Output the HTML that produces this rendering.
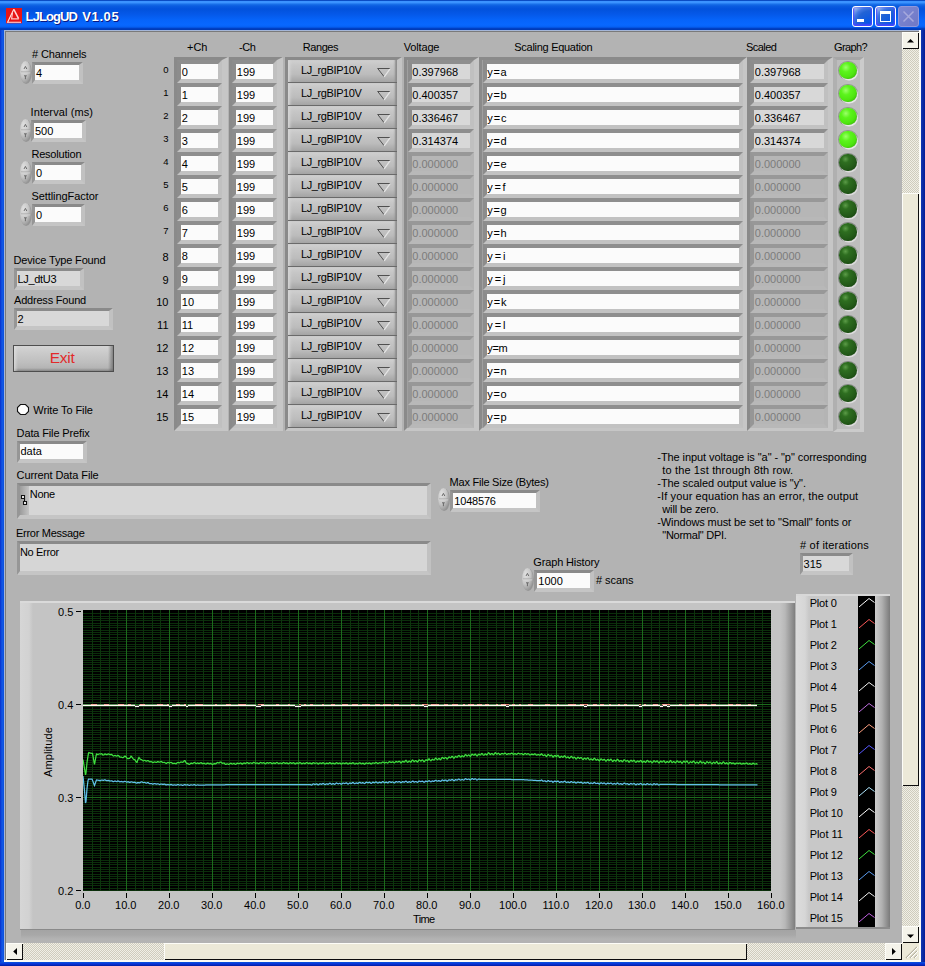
<!DOCTYPE html>
<html><head><meta charset="utf-8"><title>LJLogUD V1.05</title>
<style>
html,body{margin:0;padding:0;background:#0a3cc8;}
body{width:925px;height:966px;overflow:hidden;position:relative;font-family:"Liberation Sans", sans-serif;}
#win{position:absolute;left:0;top:0;width:925px;height:966px;overflow:hidden;
 background:linear-gradient(90deg,#0a30cc 0,#0a40d8 1px,#1258e6 2px,#0c50de 4px,#0855dd 5px,#0855dd 920px,#1038b4 921px,#0a2aa2 923px,#041c98 925px);}
#win:after{content:"";position:absolute;left:0;right:0;bottom:0;height:4px;background:linear-gradient(180deg,#0855dd 0,#0831d9 2px,#001ea0 4px);}
#title{position:absolute;left:0;top:0;width:925px;height:30px;
 background:linear-gradient(180deg,#0a4cc4 0,#0a4cc4 1px,#3b93ff 1.2px,#3b93ff 2.8px,#1a72ea 4px,#0a5ce0 6px,#0252dc 9px,#0558e8 14px,#0664fa 20px,#0868ff 25px,#0660f2 27px,#0040c4 28.5px,#0038b0 30px);
 }
.tb{position:absolute;top:6px;width:19px;height:19px;border:1px solid #fff;border-radius:3px;
 background:radial-gradient(circle at 90% 90%,#0054e9 0,#2263d5 55%,#4479e4 70%,#a3bbec 90%,#fff 100%);
 box-shadow:inset 0 -1px 2px 1px #4646ff;}
.tb.dis{border-color:#8f98dc;background:linear-gradient(135deg,#7e88d2,#6f78c6);box-shadow:none;}
#client{position:absolute;left:6px;top:32px;width:913px;height:928px;background:#b3b3b3;overflow:hidden;}
#abs{position:absolute;left:-6px;top:-32px;width:925px;height:966px;}
.t{position:absolute;white-space:pre;display:block;}
.led{position:absolute;width:17.4px;height:17.4px;border-radius:50%;}
.led.on{background:radial-gradient(circle at 38% 32%,#9cff6a 0,#5cf41c 28%,#4fe610 60%,#2c9c06 100%);box-shadow:1px 1.5px 0 0 #e8e8e8, 0 0 0 1px rgba(90,110,80,.45);}
.led.off{background:radial-gradient(circle at 36% 30%,#5c9c48 0,#2e6e20 22%,#235a18 60%,#123a0c 100%);box-shadow:1px 1.5px 0 0 #dcdcdc, 0 0 0 1px rgba(60,70,60,.45);}
#grid{position:absolute;left:0;top:0;right:0;bottom:0;background:repeating-linear-gradient(180deg,#0e340e 0,#0e340e 1px,#000 1px,#000 2.325px);}
.track{background:repeating-conic-gradient(#f0efe6 0 25%,#cfccbd 0 50%) 0 0/2px 2px;}
.sbtn.ab{background:#f4f3ea;}
.sbtn{position:relative;background:#ece9d8;box-sizing:border-box;box-shadow:inset 1px 1px 0 0 #fdfdf8, inset -1px -1px 0 0 #0c0c0c;}
</style></head>
<body>
<div id="win">
<div id="title"></div>
<svg style="position:absolute;left:6px;top:8px" width="16" height="16" viewBox="0 0 16 16">
<rect x="0" y="0" width="16" height="15.3" fill="#e81414"/>
<path d="M7.8 1.3 L1.6 14.3 L15 14.3" fill="none" stroke="#ffe6e6" stroke-width="1.1" stroke-linejoin="miter"/>
<path d="M7.8 1.3 L12.6 10.6" fill="none" stroke="#ffd8d8" stroke-width="1.5"/>
<path d="M6.5 5 L5.6 10.8 L12.8 10.8" fill="none" stroke="#ffc4c4" stroke-width="1.2"/>
</svg>
<span class="t" style="left:25.60px;top:9.40px;font-size:13px;line-height:16px;height:16px;color:#fff;letter-spacing:-0.897px;font-weight:bold;text-shadow:1px 1px 0 #0a1883;">LJLogUD</span>
<span class="t" style="left:82.30px;top:9.40px;font-size:13px;line-height:16px;height:16px;color:#fff;letter-spacing:0.603px;font-weight:bold;text-shadow:1px 1px 0 #0a1883;">V1.05</span>
<div class="tb" style="left:852px"><div style="position:absolute;left:4px;top:12px;width:7px;height:3px;background:#fff"></div></div>
<div class="tb" style="left:875px"><div style="position:absolute;left:4px;top:4px;width:9px;height:7px;border:1px solid #fff;border-top:3px solid #fff"></div></div>
<div class="tb dis" style="left:898px"><svg width="21" height="21" style="position:absolute;left:-1px;top:-1px"><path d="M5.5 5.5 L15.5 15.5 M15.5 5.5 L5.5 15.5" stroke="#a6a8dc" stroke-width="1.5" fill="none"/></svg></div>
<div style="position:absolute;left:4px;top:30px;width:917px;height:932px;background:#fff;"></div>
<div style="position:absolute;left:4px;top:30px;width:915px;height:930px;background:#a4b6d8;"></div>
<div style="position:absolute;left:5px;top:31px;width:916px;height:931px;background:#fbfbf6;"></div>
<div style="position:absolute;left:5px;top:31px;width:914px;height:929px;background:#7a7a7a;"></div>
<div id="client">
<div id="abs">
<span class="t" style="left:32.00px;top:46.79px;font-size:11px;line-height:14px;height:14px;color:#000;letter-spacing:-0.116px;"># Channels</span>
<svg style="position:absolute;left:19.4px;top:59.6px" width="14" height="25" viewBox="-1 -1 14 25">
<defs><radialGradient id="sg204_606" cx="32%" cy="28%" r="85%"><stop offset="0" stop-color="#e0e0e0"/><stop offset="0.5" stop-color="#c8c8c8"/><stop offset="0.85" stop-color="#9c9c9c"/><stop offset="1" stop-color="#808080"/></radialGradient></defs>
<ellipse cx="6.2" cy="11.8" rx="5.7" ry="11.3" fill="#7a7a7a" opacity="0.5"/>
<ellipse cx="5.6" cy="11.2" rx="5.5" ry="11.1" fill="url(#sg204_606)"/>
<path d="M1 11 H10.2" stroke="#a0a0a0" stroke-width="0.9"/>
<path d="M1 11.9 H10.2" stroke="#dadada" stroke-width="0.8"/>
<path d="M4 8 L5.4 5.4 L6.8 8" fill="none" stroke="#606060" stroke-width="0.9"/>
<path d="M4 14.8 H6.8 M5.4 15 V18.2" fill="none" stroke="#606060" stroke-width="0.9"/>
</svg>
<div style="position:absolute;left:32px;top:62px;width:44px;height:15px;box-sizing:content-box;background:#fbfbfb;border-style:solid;border-width:3px 4px 4px 3px;border-color:#8a8a8a #c1c1c1 #c5c5c5 #969696;"></div>
<span class="t" style="left:36.00px;top:65.79px;font-size:11px;line-height:14px;height:14px;color:#000;">4</span>
<span class="t" style="left:30.60px;top:104.79px;font-size:11px;line-height:14px;height:14px;color:#000;letter-spacing:0.106px;">Interval (ms)</span>
<svg style="position:absolute;left:18.7px;top:117.7px" width="14" height="25" viewBox="-1 -1 14 25">
<defs><radialGradient id="sg197_1187" cx="32%" cy="28%" r="85%"><stop offset="0" stop-color="#e0e0e0"/><stop offset="0.5" stop-color="#c8c8c8"/><stop offset="0.85" stop-color="#9c9c9c"/><stop offset="1" stop-color="#808080"/></radialGradient></defs>
<ellipse cx="6.2" cy="11.8" rx="5.7" ry="11.3" fill="#7a7a7a" opacity="0.5"/>
<ellipse cx="5.6" cy="11.2" rx="5.5" ry="11.1" fill="url(#sg197_1187)"/>
<path d="M1 11 H10.2" stroke="#a0a0a0" stroke-width="0.9"/>
<path d="M1 11.9 H10.2" stroke="#dadada" stroke-width="0.8"/>
<path d="M4 8 L5.4 5.4 L6.8 8" fill="none" stroke="#606060" stroke-width="0.9"/>
<path d="M4 14.8 H6.8 M5.4 15 V18.2" fill="none" stroke="#606060" stroke-width="0.9"/>
</svg>
<div style="position:absolute;left:31px;top:120px;width:48px;height:15px;box-sizing:content-box;background:#fbfbfb;border-style:solid;border-width:3px 4px 4px 3px;border-color:#8a8a8a #c1c1c1 #c5c5c5 #969696;"></div>
<span class="t" style="left:35.00px;top:123.79px;font-size:11px;line-height:14px;height:14px;color:#000;">500</span>
<span class="t" style="left:31.40px;top:147.19px;font-size:11px;line-height:14px;height:14px;color:#000;letter-spacing:-0.198px;">Resolution</span>
<svg style="position:absolute;left:19.4px;top:159.6px" width="14" height="25" viewBox="-1 -1 14 25">
<defs><radialGradient id="sg204_1606" cx="32%" cy="28%" r="85%"><stop offset="0" stop-color="#e0e0e0"/><stop offset="0.5" stop-color="#c8c8c8"/><stop offset="0.85" stop-color="#9c9c9c"/><stop offset="1" stop-color="#808080"/></radialGradient></defs>
<ellipse cx="6.2" cy="11.8" rx="5.7" ry="11.3" fill="#7a7a7a" opacity="0.5"/>
<ellipse cx="5.6" cy="11.2" rx="5.5" ry="11.1" fill="url(#sg204_1606)"/>
<path d="M1 11 H10.2" stroke="#a0a0a0" stroke-width="0.9"/>
<path d="M1 11.9 H10.2" stroke="#dadada" stroke-width="0.8"/>
<path d="M4 8 L5.4 5.4 L6.8 8" fill="none" stroke="#606060" stroke-width="0.9"/>
<path d="M4 14.8 H6.8 M5.4 15 V18.2" fill="none" stroke="#606060" stroke-width="0.9"/>
</svg>
<div style="position:absolute;left:32px;top:162px;width:46px;height:15px;box-sizing:content-box;background:#fbfbfb;border-style:solid;border-width:3px 4px 4px 3px;border-color:#8a8a8a #c1c1c1 #c5c5c5 #969696;"></div>
<span class="t" style="left:36.00px;top:165.79px;font-size:11px;line-height:14px;height:14px;color:#000;">0</span>
<span class="t" style="left:31.40px;top:189.19px;font-size:11px;line-height:14px;height:14px;color:#000;letter-spacing:-0.062px;">SettlingFactor</span>
<svg style="position:absolute;left:19.4px;top:201.6px" width="14" height="25" viewBox="-1 -1 14 25">
<defs><radialGradient id="sg204_2026" cx="32%" cy="28%" r="85%"><stop offset="0" stop-color="#e0e0e0"/><stop offset="0.5" stop-color="#c8c8c8"/><stop offset="0.85" stop-color="#9c9c9c"/><stop offset="1" stop-color="#808080"/></radialGradient></defs>
<ellipse cx="6.2" cy="11.8" rx="5.7" ry="11.3" fill="#7a7a7a" opacity="0.5"/>
<ellipse cx="5.6" cy="11.2" rx="5.5" ry="11.1" fill="url(#sg204_2026)"/>
<path d="M1 11 H10.2" stroke="#a0a0a0" stroke-width="0.9"/>
<path d="M1 11.9 H10.2" stroke="#dadada" stroke-width="0.8"/>
<path d="M4 8 L5.4 5.4 L6.8 8" fill="none" stroke="#606060" stroke-width="0.9"/>
<path d="M4 14.8 H6.8 M5.4 15 V18.2" fill="none" stroke="#606060" stroke-width="0.9"/>
</svg>
<div style="position:absolute;left:32px;top:204px;width:46px;height:15px;box-sizing:content-box;background:#fbfbfb;border-style:solid;border-width:3px 4px 4px 3px;border-color:#8a8a8a #c1c1c1 #c5c5c5 #969696;"></div>
<span class="t" style="left:36.00px;top:207.79px;font-size:11px;line-height:14px;height:14px;color:#000;">0</span>
<span class="t" style="left:13.50px;top:252.79px;font-size:11px;line-height:14px;height:14px;color:#000;letter-spacing:-0.152px;">Device Type Found</span>
<div style="position:absolute;left:14px;top:268px;width:63px;height:15px;box-sizing:content-box;background:#d8d8d8;border-style:solid;border-width:3px 4px 4px 3px;border-color:#8a8a8a #c1c1c1 #c5c5c5 #969696;"></div>
<span class="t" style="left:17.50px;top:271.79px;font-size:11px;line-height:14px;height:14px;color:#000;letter-spacing:-0.312px;">LJ_dtU3</span>
<span class="t" style="left:14.00px;top:292.89px;font-size:11px;line-height:14px;height:14px;color:#000;letter-spacing:-0.201px;">Address Found</span>
<div style="position:absolute;left:14px;top:308px;width:92px;height:15px;box-sizing:content-box;background:#d8d8d8;border-style:solid;border-width:3px 4px 4px 3px;border-color:#8a8a8a #c1c1c1 #c5c5c5 #969696;"></div>
<span class="t" style="left:17.50px;top:311.79px;font-size:11px;line-height:14px;height:14px;color:#000;">2</span>
<div style="position:absolute;left:13px;top:345px;width:101px;height:27px;background:linear-gradient(90deg,rgba(225,225,225,.9) 0,rgba(225,225,225,0) 5px),linear-gradient(270deg,rgba(100,100,100,.85) 0,rgba(120,120,120,0) 6px),linear-gradient(0deg,rgba(110,110,110,.8) 0,rgba(120,120,120,0) 4px),linear-gradient(180deg,#d6d6d6 0,#cacaca 30%,#bebebe 65%,#adadad 100%);box-shadow:inset 0 0 0 1px #4e4e4e;"></div>
<span class="t" style="left:49.80px;top:349.28px;font-size:15.5px;line-height:18.5px;height:18.5px;color:#e22a2a;letter-spacing:-0.311px;">Exit</span>
<svg style="position:absolute;left:16px;top:403px" width="14" height="13" viewBox="0 0 14 13">
<path d="M4.5 1.5 H9.5 L12.5 4.5 V8.5 L9.5 11.5 H4.5 L1.5 8.5 V4.5 Z" fill="#fdfdfd" stroke="#111" stroke-width="1.1"/></svg>
<span class="t" style="left:33.30px;top:402.79px;font-size:11px;line-height:14px;height:14px;color:#000;letter-spacing:-0.095px;">Write To File</span>
<span class="t" style="left:16.60px;top:425.79px;font-size:11px;line-height:14px;height:14px;color:#000;letter-spacing:-0.138px;">Data File Prefix</span>
<div style="position:absolute;left:17px;top:441px;width:63px;height:15px;box-sizing:content-box;background:#fbfbfb;border-style:solid;border-width:3px 4px 4px 3px;border-color:#8a8a8a #c1c1c1 #c5c5c5 #969696;"></div>
<span class="t" style="left:20.50px;top:444.49px;font-size:11px;line-height:14px;height:14px;color:#000;">data</span>
<span class="t" style="left:16.60px;top:467.99px;font-size:11px;line-height:14px;height:14px;color:#000;letter-spacing:-0.104px;">Current Data File</span>
<div style="position:absolute;left:17px;top:483px;width:407px;height:29px;box-sizing:content-box;background:#d6d6d6;border-style:solid;border-width:3px 4px 4px 3px;border-color:#8a8a8a #c1c1c1 #c5c5c5 #969696;"></div>
<div style="position:absolute;left:20px;top:486px;width:9px;height:29px;background:linear-gradient(90deg,#9c9c9c,#c4c4c4);"></div>
<svg style="position:absolute;left:20px;top:494px" width="9" height="12" viewBox="0 0 9 12"><path d="M1.5 1.5 H4.5 V4.5 H1.5 Z M3.5 7.5 H6.5 V10.5 H3.5 Z" fill="#f0f0f0" stroke="#111" stroke-width="1.1"/><path d="M4.5 4.5 V7.5" stroke="#111" stroke-width="1.1"/></svg>
<span class="t" style="left:29.80px;top:486.69px;font-size:11px;line-height:14px;height:14px;color:#000;letter-spacing:-0.324px;">None</span>
<span class="t" style="left:16.00px;top:525.79px;font-size:11px;line-height:14px;height:14px;color:#000;letter-spacing:-0.280px;">Error Message</span>
<div style="position:absolute;left:17px;top:540.5px;width:407px;height:27px;box-sizing:content-box;background:#d6d6d6;border-style:solid;border-width:3px 4px 4px 3px;border-color:#8a8a8a #c1c1c1 #c5c5c5 #969696;"></div>
<span class="t" style="left:19.90px;top:544.99px;font-size:11px;line-height:14px;height:14px;color:#000;letter-spacing:-0.320px;">No Error</span>
<span class="t" style="left:449.60px;top:474.89px;font-size:11px;line-height:14px;height:14px;color:#000;letter-spacing:-0.234px;">Max File Size (Bytes)</span>
<svg style="position:absolute;left:437.4px;top:487px" width="14" height="25" viewBox="-1 -1 14 25">
<defs><radialGradient id="sg4384_4880" cx="32%" cy="28%" r="85%"><stop offset="0" stop-color="#e0e0e0"/><stop offset="0.5" stop-color="#c8c8c8"/><stop offset="0.85" stop-color="#9c9c9c"/><stop offset="1" stop-color="#808080"/></radialGradient></defs>
<ellipse cx="6.2" cy="11.8" rx="5.7" ry="11.3" fill="#7a7a7a" opacity="0.5"/>
<ellipse cx="5.6" cy="11.2" rx="5.5" ry="11.1" fill="url(#sg4384_4880)"/>
<path d="M1 11 H10.2" stroke="#a0a0a0" stroke-width="0.9"/>
<path d="M1 11.9 H10.2" stroke="#dadada" stroke-width="0.8"/>
<path d="M4 8 L5.4 5.4 L6.8 8" fill="none" stroke="#606060" stroke-width="0.9"/>
<path d="M4 14.8 H6.8 M5.4 15 V18.2" fill="none" stroke="#606060" stroke-width="0.9"/>
</svg>
<div style="position:absolute;left:450px;top:490px;width:83px;height:15px;box-sizing:content-box;background:#fbfbfb;border-style:solid;border-width:3px 4px 4px 3px;border-color:#8a8a8a #c1c1c1 #c5c5c5 #969696;"></div>
<span class="t" style="left:454.30px;top:493.59px;font-size:11px;line-height:14px;height:14px;color:#000;letter-spacing:-0.190px;">1048576</span>
<span class="t" style="left:533.30px;top:554.79px;font-size:11px;line-height:14px;height:14px;color:#000;letter-spacing:-0.143px;">Graph History</span>
<svg style="position:absolute;left:520.8px;top:567.3px" width="14" height="25" viewBox="-1 -1 14 25">
<defs><radialGradient id="sg5218_5683" cx="32%" cy="28%" r="85%"><stop offset="0" stop-color="#e0e0e0"/><stop offset="0.5" stop-color="#c8c8c8"/><stop offset="0.85" stop-color="#9c9c9c"/><stop offset="1" stop-color="#808080"/></radialGradient></defs>
<ellipse cx="6.2" cy="11.8" rx="5.7" ry="11.3" fill="#7a7a7a" opacity="0.5"/>
<ellipse cx="5.6" cy="11.2" rx="5.5" ry="11.1" fill="url(#sg5218_5683)"/>
<path d="M1 11 H10.2" stroke="#a0a0a0" stroke-width="0.9"/>
<path d="M1 11.9 H10.2" stroke="#dadada" stroke-width="0.8"/>
<path d="M4 8 L5.4 5.4 L6.8 8" fill="none" stroke="#606060" stroke-width="0.9"/>
<path d="M4 14.8 H6.8 M5.4 15 V18.2" fill="none" stroke="#606060" stroke-width="0.9"/>
</svg>
<div style="position:absolute;left:534px;top:570px;width:53px;height:15px;box-sizing:content-box;background:#fbfbfb;border-style:solid;border-width:3px 4px 4px 3px;border-color:#8a8a8a #c1c1c1 #c5c5c5 #969696;"></div>
<span class="t" style="left:538.30px;top:573.69px;font-size:11px;line-height:14px;height:14px;color:#000;">1000</span>
<span class="t" style="left:596.00px;top:573.19px;font-size:11px;line-height:14px;height:14px;color:#000;letter-spacing:-0.060px;"># scans</span>
<span class="t" style="left:800.00px;top:538.19px;font-size:11px;line-height:14px;height:14px;color:#000;letter-spacing:0.197px;"># of iterations</span>
<div style="position:absolute;left:800px;top:553px;width:46px;height:15px;box-sizing:content-box;background:#d8d8d8;border-style:solid;border-width:3px 4px 4px 3px;border-color:#8a8a8a #c1c1c1 #c5c5c5 #969696;"></div>
<span class="t" style="left:803.60px;top:556.79px;font-size:11px;line-height:14px;height:14px;color:#000;">315</span>
<span class="t" style="left:657.30px;top:449.99px;font-size:11px;line-height:14px;height:14px;color:#000;letter-spacing:-0.074px;">-The input voltage is "a" - "p" corresponding</span>
<span class="t" style="left:662.30px;top:462.99px;font-size:11px;line-height:14px;height:14px;color:#000;letter-spacing:0.141px;">to the 1st through 8th row.</span>
<span class="t" style="left:657.30px;top:475.99px;font-size:11px;line-height:14px;height:14px;color:#000;letter-spacing:-0.072px;">-The scaled output value is "y".</span>
<span class="t" style="left:657.30px;top:488.99px;font-size:11px;line-height:14px;height:14px;color:#000;letter-spacing:0.112px;">-If your equation has an error, the output</span>
<span class="t" style="left:662.30px;top:501.99px;font-size:11px;line-height:14px;height:14px;color:#000;letter-spacing:-0.121px;">will be zero.</span>
<span class="t" style="left:657.30px;top:514.99px;font-size:11px;line-height:14px;height:14px;color:#000;letter-spacing:-0.114px;">-Windows must be set to "Small" fonts or</span>
<span class="t" style="left:662.30px;top:527.99px;font-size:11px;line-height:14px;height:14px;color:#000;letter-spacing:-0.263px;">"Normal" DPI.</span>
<span class="t" style="left:187.00px;top:40.19px;font-size:11px;line-height:14px;height:14px;color:#000;">+Ch</span>
<span class="t" style="left:239.00px;top:40.19px;font-size:11px;line-height:14px;height:14px;color:#000;letter-spacing:-0.411px;">-Ch</span>
<span class="t" style="left:302.70px;top:40.19px;font-size:11px;line-height:14px;height:14px;color:#000;letter-spacing:-0.404px;">Ranges</span>
<span class="t" style="left:403.80px;top:40.19px;font-size:11px;line-height:14px;height:14px;color:#000;letter-spacing:-0.172px;">Voltage</span>
<span class="t" style="left:514.30px;top:40.19px;font-size:11px;line-height:14px;height:14px;color:#000;letter-spacing:-0.285px;">Scaling Equation</span>
<span class="t" style="left:745.90px;top:40.19px;font-size:11px;line-height:14px;height:14px;color:#000;letter-spacing:-0.523px;">Scaled</span>
<span class="t" style="left:834.00px;top:40.19px;font-size:11px;line-height:14px;height:14px;color:#000;letter-spacing:-0.617px;">Graph?</span>
<div style="position:absolute;left:174px;top:57px;width:45px;height:368px;box-sizing:content-box;border-style:solid;border-width:3px 6px 3px 3px;border-color:#8a8a8a #c6c6c6 #c6c6c6 #8a8a8a;background:#a0a0a0;"></div>
<div style="position:absolute;left:229px;top:57px;width:45px;height:368px;box-sizing:content-box;border-style:solid;border-width:3px 6px 3px 3px;border-color:#8a8a8a #c6c6c6 #c6c6c6 #8a8a8a;background:#a0a0a0;"></div>
<div style="position:absolute;left:285px;top:57px;width:109px;height:368px;box-sizing:content-box;border-style:solid;border-width:3px 5px 3px 3px;border-color:#8a8a8a #c4c4c4 #c6c6c6 #8a8a8a;background:#6a6a6a;"></div>
<div style="position:absolute;left:404px;top:57px;width:66.5px;height:368px;box-sizing:content-box;border-style:solid;border-width:3px 5.5px 3px 3px;border-color:#8a8a8a #c6c6c6 #c6c6c6 #8a8a8a;background:#a0a0a0;"></div>
<div style="position:absolute;left:479px;top:57px;width:260.5px;height:368px;box-sizing:content-box;border-style:solid;border-width:3px 4.5px 3px 3px;border-color:#8a8a8a #c6c6c6 #c6c6c6 #8a8a8a;background:#a0a0a0;"></div>
<div style="position:absolute;left:747px;top:57px;width:78px;height:368px;box-sizing:content-box;border-style:solid;border-width:3px 5px 3px 3px;border-color:#8a8a8a #c6c6c6 #c6c6c6 #8a8a8a;background:#a0a0a0;"></div>
<div style="position:absolute;left:833px;top:57px;width:23px;height:368.5px;box-sizing:content-box;border-style:solid;border-width:3px 4px 3.5px 4px;border-color:#a6a6a6 #cbcbcb #cbcbcb #b0b0b0;background:#bdbdbd;"></div>
<span class="t" style="right:756.50px;top:64.46px;font-size:9.5px;line-height:12.5px;height:12.5px;color:#000;">0</span>
<div style="position:absolute;left:177px;top:60px;width:37px;height:15px;box-sizing:content-box;background:#fbfbfb;border-style:solid;border-width:4px;border-color:#8e8e8e #c0c0c0 #c2c2c2 #8c8c8c;"></div>
<span class="t" style="left:181.80px;top:64.79px;font-size:11px;line-height:14px;height:14px;color:#000;">0</span>
<div style="position:absolute;left:232px;top:60px;width:37px;height:15px;box-sizing:content-box;background:#fbfbfb;border-style:solid;border-width:4px;border-color:#8e8e8e #c0c0c0 #c2c2c2 #8c8c8c;"></div>
<span class="t" style="left:236.80px;top:64.79px;font-size:11px;line-height:14px;height:14px;color:#000;">199</span>
<div style="position:absolute;left:288px;top:60px;width:109px;height:22px;background:linear-gradient(180deg,#d0d0d0 0,#c6c6c6 25%,#bcbcbc 65%,#a4a4a4 100%);box-shadow:inset -3px 0 2px -1px #8c8c8c, inset 4px 0 3px -2px #d6d6d6;"></div>
<span class="t" style="left:301.00px;top:62.79px;font-size:11px;line-height:14px;height:14px;color:#000;letter-spacing:-0.393px;">LJ_rgBIP10V</span>
<svg style="position:absolute;left:376px;top:67px" width="16" height="11" viewBox="0 0 16 11"><path d="M1.5 1.5 H14 M1.8 1.6 L8 9.6" stroke="#505050" stroke-width="1" fill="none"/><path d="M14 1.8 L8.2 9.8" stroke="#e6e6e6" stroke-width="1.2" fill="none"/></svg>
<div style="position:absolute;left:407.5px;top:60px;width:58.5px;height:15px;box-sizing:content-box;background:#d8d8d8;border-style:solid;border-width:4px;border-color:#8e8e8e #c0c0c0 #c2c2c2 #8c8c8c;"></div>
<span class="t" style="left:412.30px;top:64.79px;font-size:11px;line-height:14px;height:14px;color:#000;">0.397968</span>
<div style="position:absolute;left:482.5px;top:60px;width:252.5px;height:15px;box-sizing:content-box;background:#fbfbfb;border-style:solid;border-width:4px;border-color:#8e8e8e #c0c0c0 #c2c2c2 #8c8c8c;"></div>
<span class="t" style="left:487.30px;top:64.79px;font-size:11px;line-height:14px;height:14px;color:#000;letter-spacing:0.651px;">y=a</span>
<div style="position:absolute;left:750px;top:60px;width:70px;height:15px;box-sizing:content-box;background:#d8d8d8;border-style:solid;border-width:4px;border-color:#8e8e8e #c0c0c0 #c2c2c2 #8c8c8c;"></div>
<span class="t" style="left:754.80px;top:64.79px;font-size:11px;line-height:14px;height:14px;color:#000;">0.397968</span>
<div class="led on" style="left:839.3px;top:61.8px"></div>
<span class="t" style="right:756.50px;top:87.46px;font-size:9.5px;line-height:12.5px;height:12.5px;color:#000;">1</span>
<div style="position:absolute;left:177px;top:83px;width:37px;height:15px;box-sizing:content-box;background:#fbfbfb;border-style:solid;border-width:4px;border-color:#8e8e8e #c0c0c0 #c2c2c2 #8c8c8c;"></div>
<span class="t" style="left:181.80px;top:87.79px;font-size:11px;line-height:14px;height:14px;color:#000;">1</span>
<div style="position:absolute;left:232px;top:83px;width:37px;height:15px;box-sizing:content-box;background:#fbfbfb;border-style:solid;border-width:4px;border-color:#8e8e8e #c0c0c0 #c2c2c2 #8c8c8c;"></div>
<span class="t" style="left:236.80px;top:87.79px;font-size:11px;line-height:14px;height:14px;color:#000;">199</span>
<div style="position:absolute;left:288px;top:83px;width:109px;height:22px;background:linear-gradient(180deg,#d0d0d0 0,#c6c6c6 25%,#bcbcbc 65%,#a4a4a4 100%);box-shadow:inset -3px 0 2px -1px #8c8c8c, inset 4px 0 3px -2px #d6d6d6;"></div>
<span class="t" style="left:301.00px;top:85.79px;font-size:11px;line-height:14px;height:14px;color:#000;letter-spacing:-0.393px;">LJ_rgBIP10V</span>
<svg style="position:absolute;left:376px;top:90px" width="16" height="11" viewBox="0 0 16 11"><path d="M1.5 1.5 H14 M1.8 1.6 L8 9.6" stroke="#505050" stroke-width="1" fill="none"/><path d="M14 1.8 L8.2 9.8" stroke="#e6e6e6" stroke-width="1.2" fill="none"/></svg>
<div style="position:absolute;left:407.5px;top:83px;width:58.5px;height:15px;box-sizing:content-box;background:#d8d8d8;border-style:solid;border-width:4px;border-color:#8e8e8e #c0c0c0 #c2c2c2 #8c8c8c;"></div>
<span class="t" style="left:412.30px;top:87.79px;font-size:11px;line-height:14px;height:14px;color:#000;">0.400357</span>
<div style="position:absolute;left:482.5px;top:83px;width:252.5px;height:15px;box-sizing:content-box;background:#fbfbfb;border-style:solid;border-width:4px;border-color:#8e8e8e #c0c0c0 #c2c2c2 #8c8c8c;"></div>
<span class="t" style="left:487.30px;top:87.79px;font-size:11px;line-height:14px;height:14px;color:#000;letter-spacing:0.651px;">y=b</span>
<div style="position:absolute;left:750px;top:83px;width:70px;height:15px;box-sizing:content-box;background:#d8d8d8;border-style:solid;border-width:4px;border-color:#8e8e8e #c0c0c0 #c2c2c2 #8c8c8c;"></div>
<span class="t" style="left:754.80px;top:87.79px;font-size:11px;line-height:14px;height:14px;color:#000;">0.400357</span>
<div class="led on" style="left:839.3px;top:84.9px"></div>
<span class="t" style="right:756.50px;top:110.46px;font-size:9.5px;line-height:12.5px;height:12.5px;color:#000;">2</span>
<div style="position:absolute;left:177px;top:106px;width:37px;height:15px;box-sizing:content-box;background:#fbfbfb;border-style:solid;border-width:4px;border-color:#8e8e8e #c0c0c0 #c2c2c2 #8c8c8c;"></div>
<span class="t" style="left:181.80px;top:110.79px;font-size:11px;line-height:14px;height:14px;color:#000;">2</span>
<div style="position:absolute;left:232px;top:106px;width:37px;height:15px;box-sizing:content-box;background:#fbfbfb;border-style:solid;border-width:4px;border-color:#8e8e8e #c0c0c0 #c2c2c2 #8c8c8c;"></div>
<span class="t" style="left:236.80px;top:110.79px;font-size:11px;line-height:14px;height:14px;color:#000;">199</span>
<div style="position:absolute;left:288px;top:106px;width:109px;height:22px;background:linear-gradient(180deg,#d0d0d0 0,#c6c6c6 25%,#bcbcbc 65%,#a4a4a4 100%);box-shadow:inset -3px 0 2px -1px #8c8c8c, inset 4px 0 3px -2px #d6d6d6;"></div>
<span class="t" style="left:301.00px;top:108.79px;font-size:11px;line-height:14px;height:14px;color:#000;letter-spacing:-0.393px;">LJ_rgBIP10V</span>
<svg style="position:absolute;left:376px;top:113px" width="16" height="11" viewBox="0 0 16 11"><path d="M1.5 1.5 H14 M1.8 1.6 L8 9.6" stroke="#505050" stroke-width="1" fill="none"/><path d="M14 1.8 L8.2 9.8" stroke="#e6e6e6" stroke-width="1.2" fill="none"/></svg>
<div style="position:absolute;left:407.5px;top:106px;width:58.5px;height:15px;box-sizing:content-box;background:#d8d8d8;border-style:solid;border-width:4px;border-color:#8e8e8e #c0c0c0 #c2c2c2 #8c8c8c;"></div>
<span class="t" style="left:412.30px;top:110.79px;font-size:11px;line-height:14px;height:14px;color:#000;">0.336467</span>
<div style="position:absolute;left:482.5px;top:106px;width:252.5px;height:15px;box-sizing:content-box;background:#fbfbfb;border-style:solid;border-width:4px;border-color:#8e8e8e #c0c0c0 #c2c2c2 #8c8c8c;"></div>
<span class="t" style="left:487.30px;top:110.79px;font-size:11px;line-height:14px;height:14px;color:#000;letter-spacing:0.854px;">y=c</span>
<div style="position:absolute;left:750px;top:106px;width:70px;height:15px;box-sizing:content-box;background:#d8d8d8;border-style:solid;border-width:4px;border-color:#8e8e8e #c0c0c0 #c2c2c2 #8c8c8c;"></div>
<span class="t" style="left:754.80px;top:110.79px;font-size:11px;line-height:14px;height:14px;color:#000;">0.336467</span>
<div class="led on" style="left:839.3px;top:107.9px"></div>
<span class="t" style="right:756.50px;top:133.46px;font-size:9.5px;line-height:12.5px;height:12.5px;color:#000;">3</span>
<div style="position:absolute;left:177px;top:129px;width:37px;height:15px;box-sizing:content-box;background:#fbfbfb;border-style:solid;border-width:4px;border-color:#8e8e8e #c0c0c0 #c2c2c2 #8c8c8c;"></div>
<span class="t" style="left:181.80px;top:133.79px;font-size:11px;line-height:14px;height:14px;color:#000;">3</span>
<div style="position:absolute;left:232px;top:129px;width:37px;height:15px;box-sizing:content-box;background:#fbfbfb;border-style:solid;border-width:4px;border-color:#8e8e8e #c0c0c0 #c2c2c2 #8c8c8c;"></div>
<span class="t" style="left:236.80px;top:133.79px;font-size:11px;line-height:14px;height:14px;color:#000;">199</span>
<div style="position:absolute;left:288px;top:129px;width:109px;height:22px;background:linear-gradient(180deg,#d0d0d0 0,#c6c6c6 25%,#bcbcbc 65%,#a4a4a4 100%);box-shadow:inset -3px 0 2px -1px #8c8c8c, inset 4px 0 3px -2px #d6d6d6;"></div>
<span class="t" style="left:301.00px;top:131.79px;font-size:11px;line-height:14px;height:14px;color:#000;letter-spacing:-0.393px;">LJ_rgBIP10V</span>
<svg style="position:absolute;left:376px;top:136px" width="16" height="11" viewBox="0 0 16 11"><path d="M1.5 1.5 H14 M1.8 1.6 L8 9.6" stroke="#505050" stroke-width="1" fill="none"/><path d="M14 1.8 L8.2 9.8" stroke="#e6e6e6" stroke-width="1.2" fill="none"/></svg>
<div style="position:absolute;left:407.5px;top:129px;width:58.5px;height:15px;box-sizing:content-box;background:#d8d8d8;border-style:solid;border-width:4px;border-color:#8e8e8e #c0c0c0 #c2c2c2 #8c8c8c;"></div>
<span class="t" style="left:412.30px;top:133.79px;font-size:11px;line-height:14px;height:14px;color:#000;">0.314374</span>
<div style="position:absolute;left:482.5px;top:129px;width:252.5px;height:15px;box-sizing:content-box;background:#fbfbfb;border-style:solid;border-width:4px;border-color:#8e8e8e #c0c0c0 #c2c2c2 #8c8c8c;"></div>
<span class="t" style="left:487.30px;top:133.79px;font-size:11px;line-height:14px;height:14px;color:#000;letter-spacing:0.651px;">y=d</span>
<div style="position:absolute;left:750px;top:129px;width:70px;height:15px;box-sizing:content-box;background:#d8d8d8;border-style:solid;border-width:4px;border-color:#8e8e8e #c0c0c0 #c2c2c2 #8c8c8c;"></div>
<span class="t" style="left:754.80px;top:133.79px;font-size:11px;line-height:14px;height:14px;color:#000;">0.314374</span>
<div class="led on" style="left:839.3px;top:131.0px"></div>
<span class="t" style="right:756.50px;top:156.46px;font-size:9.5px;line-height:12.5px;height:12.5px;color:#000;">4</span>
<div style="position:absolute;left:177px;top:152px;width:37px;height:15px;box-sizing:content-box;background:#fbfbfb;border-style:solid;border-width:4px;border-color:#8e8e8e #c0c0c0 #c2c2c2 #8c8c8c;"></div>
<span class="t" style="left:181.80px;top:156.79px;font-size:11px;line-height:14px;height:14px;color:#000;">4</span>
<div style="position:absolute;left:232px;top:152px;width:37px;height:15px;box-sizing:content-box;background:#fbfbfb;border-style:solid;border-width:4px;border-color:#8e8e8e #c0c0c0 #c2c2c2 #8c8c8c;"></div>
<span class="t" style="left:236.80px;top:156.79px;font-size:11px;line-height:14px;height:14px;color:#000;">199</span>
<div style="position:absolute;left:288px;top:152px;width:109px;height:22px;background:linear-gradient(180deg,#d0d0d0 0,#c6c6c6 25%,#bcbcbc 65%,#a4a4a4 100%);box-shadow:inset -3px 0 2px -1px #8c8c8c, inset 4px 0 3px -2px #d6d6d6;"></div>
<span class="t" style="left:301.00px;top:154.79px;font-size:11px;line-height:14px;height:14px;color:#000;letter-spacing:-0.393px;">LJ_rgBIP10V</span>
<svg style="position:absolute;left:376px;top:159px" width="16" height="11" viewBox="0 0 16 11"><path d="M1.5 1.5 H14 M1.8 1.6 L8 9.6" stroke="#505050" stroke-width="1" fill="none"/><path d="M14 1.8 L8.2 9.8" stroke="#e6e6e6" stroke-width="1.2" fill="none"/></svg>
<div style="position:absolute;left:407.5px;top:152px;width:58.5px;height:15px;box-sizing:content-box;background:#b6b6b6;border-style:solid;border-width:4px;border-color:#989898 #b4b4b4 #b8b8b8 #969696;"></div>
<span class="t" style="left:412.30px;top:156.79px;font-size:11px;line-height:14px;height:14px;color:#7c7c7c;">0.000000</span>
<div style="position:absolute;left:482.5px;top:152px;width:252.5px;height:15px;box-sizing:content-box;background:#fbfbfb;border-style:solid;border-width:4px;border-color:#8e8e8e #c0c0c0 #c2c2c2 #8c8c8c;"></div>
<span class="t" style="left:487.30px;top:156.79px;font-size:11px;line-height:14px;height:14px;color:#000;letter-spacing:0.651px;">y=e</span>
<div style="position:absolute;left:750px;top:152px;width:70px;height:15px;box-sizing:content-box;background:#b6b6b6;border-style:solid;border-width:4px;border-color:#989898 #b4b4b4 #b8b8b8 #969696;"></div>
<span class="t" style="left:754.80px;top:156.79px;font-size:11px;line-height:14px;height:14px;color:#7c7c7c;">0.000000</span>
<div class="led off" style="left:839.3px;top:154.0px"></div>
<span class="t" style="right:756.50px;top:179.46px;font-size:9.5px;line-height:12.5px;height:12.5px;color:#000;">5</span>
<div style="position:absolute;left:177px;top:175px;width:37px;height:15px;box-sizing:content-box;background:#fbfbfb;border-style:solid;border-width:4px;border-color:#8e8e8e #c0c0c0 #c2c2c2 #8c8c8c;"></div>
<span class="t" style="left:181.80px;top:179.79px;font-size:11px;line-height:14px;height:14px;color:#000;">5</span>
<div style="position:absolute;left:232px;top:175px;width:37px;height:15px;box-sizing:content-box;background:#fbfbfb;border-style:solid;border-width:4px;border-color:#8e8e8e #c0c0c0 #c2c2c2 #8c8c8c;"></div>
<span class="t" style="left:236.80px;top:179.79px;font-size:11px;line-height:14px;height:14px;color:#000;">199</span>
<div style="position:absolute;left:288px;top:175px;width:109px;height:22px;background:linear-gradient(180deg,#d0d0d0 0,#c6c6c6 25%,#bcbcbc 65%,#a4a4a4 100%);box-shadow:inset -3px 0 2px -1px #8c8c8c, inset 4px 0 3px -2px #d6d6d6;"></div>
<span class="t" style="left:301.00px;top:177.79px;font-size:11px;line-height:14px;height:14px;color:#000;letter-spacing:-0.393px;">LJ_rgBIP10V</span>
<svg style="position:absolute;left:376px;top:182px" width="16" height="11" viewBox="0 0 16 11"><path d="M1.5 1.5 H14 M1.8 1.6 L8 9.6" stroke="#505050" stroke-width="1" fill="none"/><path d="M14 1.8 L8.2 9.8" stroke="#e6e6e6" stroke-width="1.2" fill="none"/></svg>
<div style="position:absolute;left:407.5px;top:175px;width:58.5px;height:15px;box-sizing:content-box;background:#b6b6b6;border-style:solid;border-width:4px;border-color:#989898 #b4b4b4 #b8b8b8 #969696;"></div>
<span class="t" style="left:412.30px;top:179.79px;font-size:11px;line-height:14px;height:14px;color:#7c7c7c;">0.000000</span>
<div style="position:absolute;left:482.5px;top:175px;width:252.5px;height:15px;box-sizing:content-box;background:#fbfbfb;border-style:solid;border-width:4px;border-color:#8e8e8e #c0c0c0 #c2c2c2 #8c8c8c;"></div>
<span class="t" style="left:487.30px;top:179.79px;font-size:11px;line-height:14px;height:14px;color:#000;letter-spacing:1.672px;">y=f</span>
<div style="position:absolute;left:750px;top:175px;width:70px;height:15px;box-sizing:content-box;background:#b6b6b6;border-style:solid;border-width:4px;border-color:#989898 #b4b4b4 #b8b8b8 #969696;"></div>
<span class="t" style="left:754.80px;top:179.79px;font-size:11px;line-height:14px;height:14px;color:#7c7c7c;">0.000000</span>
<div class="led off" style="left:839.3px;top:177.1px"></div>
<span class="t" style="right:756.50px;top:202.46px;font-size:9.5px;line-height:12.5px;height:12.5px;color:#000;">6</span>
<div style="position:absolute;left:177px;top:198px;width:37px;height:15px;box-sizing:content-box;background:#fbfbfb;border-style:solid;border-width:4px;border-color:#8e8e8e #c0c0c0 #c2c2c2 #8c8c8c;"></div>
<span class="t" style="left:181.80px;top:202.79px;font-size:11px;line-height:14px;height:14px;color:#000;">6</span>
<div style="position:absolute;left:232px;top:198px;width:37px;height:15px;box-sizing:content-box;background:#fbfbfb;border-style:solid;border-width:4px;border-color:#8e8e8e #c0c0c0 #c2c2c2 #8c8c8c;"></div>
<span class="t" style="left:236.80px;top:202.79px;font-size:11px;line-height:14px;height:14px;color:#000;">199</span>
<div style="position:absolute;left:288px;top:198px;width:109px;height:22px;background:linear-gradient(180deg,#d0d0d0 0,#c6c6c6 25%,#bcbcbc 65%,#a4a4a4 100%);box-shadow:inset -3px 0 2px -1px #8c8c8c, inset 4px 0 3px -2px #d6d6d6;"></div>
<span class="t" style="left:301.00px;top:200.79px;font-size:11px;line-height:14px;height:14px;color:#000;letter-spacing:-0.393px;">LJ_rgBIP10V</span>
<svg style="position:absolute;left:376px;top:205px" width="16" height="11" viewBox="0 0 16 11"><path d="M1.5 1.5 H14 M1.8 1.6 L8 9.6" stroke="#505050" stroke-width="1" fill="none"/><path d="M14 1.8 L8.2 9.8" stroke="#e6e6e6" stroke-width="1.2" fill="none"/></svg>
<div style="position:absolute;left:407.5px;top:198px;width:58.5px;height:15px;box-sizing:content-box;background:#b6b6b6;border-style:solid;border-width:4px;border-color:#989898 #b4b4b4 #b8b8b8 #969696;"></div>
<span class="t" style="left:412.30px;top:202.79px;font-size:11px;line-height:14px;height:14px;color:#7c7c7c;">0.000000</span>
<div style="position:absolute;left:482.5px;top:198px;width:252.5px;height:15px;box-sizing:content-box;background:#fbfbfb;border-style:solid;border-width:4px;border-color:#8e8e8e #c0c0c0 #c2c2c2 #8c8c8c;"></div>
<span class="t" style="left:487.30px;top:202.79px;font-size:11px;line-height:14px;height:14px;color:#000;letter-spacing:0.651px;">y=g</span>
<div style="position:absolute;left:750px;top:198px;width:70px;height:15px;box-sizing:content-box;background:#b6b6b6;border-style:solid;border-width:4px;border-color:#989898 #b4b4b4 #b8b8b8 #969696;"></div>
<span class="t" style="left:754.80px;top:202.79px;font-size:11px;line-height:14px;height:14px;color:#7c7c7c;">0.000000</span>
<div class="led off" style="left:839.3px;top:200.2px"></div>
<span class="t" style="right:756.50px;top:225.46px;font-size:9.5px;line-height:12.5px;height:12.5px;color:#000;">7</span>
<div style="position:absolute;left:177px;top:221px;width:37px;height:15px;box-sizing:content-box;background:#fbfbfb;border-style:solid;border-width:4px;border-color:#8e8e8e #c0c0c0 #c2c2c2 #8c8c8c;"></div>
<span class="t" style="left:181.80px;top:225.79px;font-size:11px;line-height:14px;height:14px;color:#000;">7</span>
<div style="position:absolute;left:232px;top:221px;width:37px;height:15px;box-sizing:content-box;background:#fbfbfb;border-style:solid;border-width:4px;border-color:#8e8e8e #c0c0c0 #c2c2c2 #8c8c8c;"></div>
<span class="t" style="left:236.80px;top:225.79px;font-size:11px;line-height:14px;height:14px;color:#000;">199</span>
<div style="position:absolute;left:288px;top:221px;width:109px;height:22px;background:linear-gradient(180deg,#d0d0d0 0,#c6c6c6 25%,#bcbcbc 65%,#a4a4a4 100%);box-shadow:inset -3px 0 2px -1px #8c8c8c, inset 4px 0 3px -2px #d6d6d6;"></div>
<span class="t" style="left:301.00px;top:223.79px;font-size:11px;line-height:14px;height:14px;color:#000;letter-spacing:-0.393px;">LJ_rgBIP10V</span>
<svg style="position:absolute;left:376px;top:228px" width="16" height="11" viewBox="0 0 16 11"><path d="M1.5 1.5 H14 M1.8 1.6 L8 9.6" stroke="#505050" stroke-width="1" fill="none"/><path d="M14 1.8 L8.2 9.8" stroke="#e6e6e6" stroke-width="1.2" fill="none"/></svg>
<div style="position:absolute;left:407.5px;top:221px;width:58.5px;height:15px;box-sizing:content-box;background:#b6b6b6;border-style:solid;border-width:4px;border-color:#989898 #b4b4b4 #b8b8b8 #969696;"></div>
<span class="t" style="left:412.30px;top:225.79px;font-size:11px;line-height:14px;height:14px;color:#7c7c7c;">0.000000</span>
<div style="position:absolute;left:482.5px;top:221px;width:252.5px;height:15px;box-sizing:content-box;background:#fbfbfb;border-style:solid;border-width:4px;border-color:#8e8e8e #c0c0c0 #c2c2c2 #8c8c8c;"></div>
<span class="t" style="left:487.30px;top:225.79px;font-size:11px;line-height:14px;height:14px;color:#000;letter-spacing:0.651px;">y=h</span>
<div style="position:absolute;left:750px;top:221px;width:70px;height:15px;box-sizing:content-box;background:#b6b6b6;border-style:solid;border-width:4px;border-color:#989898 #b4b4b4 #b8b8b8 #969696;"></div>
<span class="t" style="left:754.80px;top:225.79px;font-size:11px;line-height:14px;height:14px;color:#7c7c7c;">0.000000</span>
<div class="led off" style="left:839.3px;top:223.2px"></div>
<span class="t" style="right:756.50px;top:250.19px;font-size:11px;line-height:14px;height:14px;color:#000;">8</span>
<div style="position:absolute;left:177px;top:244px;width:37px;height:15px;box-sizing:content-box;background:#fbfbfb;border-style:solid;border-width:4px;border-color:#8e8e8e #c0c0c0 #c2c2c2 #8c8c8c;"></div>
<span class="t" style="left:181.80px;top:248.79px;font-size:11px;line-height:14px;height:14px;color:#000;">8</span>
<div style="position:absolute;left:232px;top:244px;width:37px;height:15px;box-sizing:content-box;background:#fbfbfb;border-style:solid;border-width:4px;border-color:#8e8e8e #c0c0c0 #c2c2c2 #8c8c8c;"></div>
<span class="t" style="left:236.80px;top:248.79px;font-size:11px;line-height:14px;height:14px;color:#000;">199</span>
<div style="position:absolute;left:288px;top:244px;width:109px;height:22px;background:linear-gradient(180deg,#d0d0d0 0,#c6c6c6 25%,#bcbcbc 65%,#a4a4a4 100%);box-shadow:inset -3px 0 2px -1px #8c8c8c, inset 4px 0 3px -2px #d6d6d6;"></div>
<span class="t" style="left:301.00px;top:246.79px;font-size:11px;line-height:14px;height:14px;color:#000;letter-spacing:-0.393px;">LJ_rgBIP10V</span>
<svg style="position:absolute;left:376px;top:251px" width="16" height="11" viewBox="0 0 16 11"><path d="M1.5 1.5 H14 M1.8 1.6 L8 9.6" stroke="#505050" stroke-width="1" fill="none"/><path d="M14 1.8 L8.2 9.8" stroke="#e6e6e6" stroke-width="1.2" fill="none"/></svg>
<div style="position:absolute;left:407.5px;top:244px;width:58.5px;height:15px;box-sizing:content-box;background:#b6b6b6;border-style:solid;border-width:4px;border-color:#989898 #b4b4b4 #b8b8b8 #969696;"></div>
<span class="t" style="left:412.30px;top:248.79px;font-size:11px;line-height:14px;height:14px;color:#7c7c7c;">0.000000</span>
<div style="position:absolute;left:482.5px;top:244px;width:252.5px;height:15px;box-sizing:content-box;background:#fbfbfb;border-style:solid;border-width:4px;border-color:#8e8e8e #c0c0c0 #c2c2c2 #8c8c8c;"></div>
<span class="t" style="left:487.30px;top:248.79px;font-size:11px;line-height:14px;height:14px;color:#000;letter-spacing:1.875px;">y=i</span>
<div style="position:absolute;left:750px;top:244px;width:70px;height:15px;box-sizing:content-box;background:#b6b6b6;border-style:solid;border-width:4px;border-color:#989898 #b4b4b4 #b8b8b8 #969696;"></div>
<span class="t" style="left:754.80px;top:248.79px;font-size:11px;line-height:14px;height:14px;color:#7c7c7c;">0.000000</span>
<div class="led off" style="left:839.3px;top:246.3px"></div>
<span class="t" style="right:756.50px;top:273.19px;font-size:11px;line-height:14px;height:14px;color:#000;">9</span>
<div style="position:absolute;left:177px;top:267px;width:37px;height:15px;box-sizing:content-box;background:#fbfbfb;border-style:solid;border-width:4px;border-color:#8e8e8e #c0c0c0 #c2c2c2 #8c8c8c;"></div>
<span class="t" style="left:181.80px;top:271.79px;font-size:11px;line-height:14px;height:14px;color:#000;">9</span>
<div style="position:absolute;left:232px;top:267px;width:37px;height:15px;box-sizing:content-box;background:#fbfbfb;border-style:solid;border-width:4px;border-color:#8e8e8e #c0c0c0 #c2c2c2 #8c8c8c;"></div>
<span class="t" style="left:236.80px;top:271.79px;font-size:11px;line-height:14px;height:14px;color:#000;">199</span>
<div style="position:absolute;left:288px;top:267px;width:109px;height:22px;background:linear-gradient(180deg,#d0d0d0 0,#c6c6c6 25%,#bcbcbc 65%,#a4a4a4 100%);box-shadow:inset -3px 0 2px -1px #8c8c8c, inset 4px 0 3px -2px #d6d6d6;"></div>
<span class="t" style="left:301.00px;top:269.79px;font-size:11px;line-height:14px;height:14px;color:#000;letter-spacing:-0.393px;">LJ_rgBIP10V</span>
<svg style="position:absolute;left:376px;top:274px" width="16" height="11" viewBox="0 0 16 11"><path d="M1.5 1.5 H14 M1.8 1.6 L8 9.6" stroke="#505050" stroke-width="1" fill="none"/><path d="M14 1.8 L8.2 9.8" stroke="#e6e6e6" stroke-width="1.2" fill="none"/></svg>
<div style="position:absolute;left:407.5px;top:267px;width:58.5px;height:15px;box-sizing:content-box;background:#b6b6b6;border-style:solid;border-width:4px;border-color:#989898 #b4b4b4 #b8b8b8 #969696;"></div>
<span class="t" style="left:412.30px;top:271.79px;font-size:11px;line-height:14px;height:14px;color:#7c7c7c;">0.000000</span>
<div style="position:absolute;left:482.5px;top:267px;width:252.5px;height:15px;box-sizing:content-box;background:#fbfbfb;border-style:solid;border-width:4px;border-color:#8e8e8e #c0c0c0 #c2c2c2 #8c8c8c;"></div>
<span class="t" style="left:487.30px;top:271.79px;font-size:11px;line-height:14px;height:14px;color:#000;letter-spacing:1.875px;">y=j</span>
<div style="position:absolute;left:750px;top:267px;width:70px;height:15px;box-sizing:content-box;background:#b6b6b6;border-style:solid;border-width:4px;border-color:#989898 #b4b4b4 #b8b8b8 #969696;"></div>
<span class="t" style="left:754.80px;top:271.79px;font-size:11px;line-height:14px;height:14px;color:#7c7c7c;">0.000000</span>
<div class="led off" style="left:839.3px;top:269.3px"></div>
<span class="t" style="right:756.50px;top:294.89px;font-size:11px;line-height:14px;height:14px;color:#000;">10</span>
<div style="position:absolute;left:177px;top:290px;width:37px;height:15px;box-sizing:content-box;background:#fbfbfb;border-style:solid;border-width:4px;border-color:#8e8e8e #c0c0c0 #c2c2c2 #8c8c8c;"></div>
<span class="t" style="left:181.80px;top:294.79px;font-size:11px;line-height:14px;height:14px;color:#000;">10</span>
<div style="position:absolute;left:232px;top:290px;width:37px;height:15px;box-sizing:content-box;background:#fbfbfb;border-style:solid;border-width:4px;border-color:#8e8e8e #c0c0c0 #c2c2c2 #8c8c8c;"></div>
<span class="t" style="left:236.80px;top:294.79px;font-size:11px;line-height:14px;height:14px;color:#000;">199</span>
<div style="position:absolute;left:288px;top:290px;width:109px;height:22px;background:linear-gradient(180deg,#d0d0d0 0,#c6c6c6 25%,#bcbcbc 65%,#a4a4a4 100%);box-shadow:inset -3px 0 2px -1px #8c8c8c, inset 4px 0 3px -2px #d6d6d6;"></div>
<span class="t" style="left:301.00px;top:292.79px;font-size:11px;line-height:14px;height:14px;color:#000;letter-spacing:-0.393px;">LJ_rgBIP10V</span>
<svg style="position:absolute;left:376px;top:297px" width="16" height="11" viewBox="0 0 16 11"><path d="M1.5 1.5 H14 M1.8 1.6 L8 9.6" stroke="#505050" stroke-width="1" fill="none"/><path d="M14 1.8 L8.2 9.8" stroke="#e6e6e6" stroke-width="1.2" fill="none"/></svg>
<div style="position:absolute;left:407.5px;top:290px;width:58.5px;height:15px;box-sizing:content-box;background:#b6b6b6;border-style:solid;border-width:4px;border-color:#989898 #b4b4b4 #b8b8b8 #969696;"></div>
<span class="t" style="left:412.30px;top:294.79px;font-size:11px;line-height:14px;height:14px;color:#7c7c7c;">0.000000</span>
<div style="position:absolute;left:482.5px;top:290px;width:252.5px;height:15px;box-sizing:content-box;background:#fbfbfb;border-style:solid;border-width:4px;border-color:#8e8e8e #c0c0c0 #c2c2c2 #8c8c8c;"></div>
<span class="t" style="left:487.30px;top:294.79px;font-size:11px;line-height:14px;height:14px;color:#000;letter-spacing:0.854px;">y=k</span>
<div style="position:absolute;left:750px;top:290px;width:70px;height:15px;box-sizing:content-box;background:#b6b6b6;border-style:solid;border-width:4px;border-color:#989898 #b4b4b4 #b8b8b8 #969696;"></div>
<span class="t" style="left:754.80px;top:294.79px;font-size:11px;line-height:14px;height:14px;color:#7c7c7c;">0.000000</span>
<div class="led off" style="left:839.3px;top:292.4px"></div>
<span class="t" style="right:756.50px;top:317.89px;font-size:11px;line-height:14px;height:14px;color:#000;">11</span>
<div style="position:absolute;left:177px;top:313px;width:37px;height:15px;box-sizing:content-box;background:#fbfbfb;border-style:solid;border-width:4px;border-color:#8e8e8e #c0c0c0 #c2c2c2 #8c8c8c;"></div>
<span class="t" style="left:181.80px;top:317.79px;font-size:11px;line-height:14px;height:14px;color:#000;">11</span>
<div style="position:absolute;left:232px;top:313px;width:37px;height:15px;box-sizing:content-box;background:#fbfbfb;border-style:solid;border-width:4px;border-color:#8e8e8e #c0c0c0 #c2c2c2 #8c8c8c;"></div>
<span class="t" style="left:236.80px;top:317.79px;font-size:11px;line-height:14px;height:14px;color:#000;">199</span>
<div style="position:absolute;left:288px;top:313px;width:109px;height:22px;background:linear-gradient(180deg,#d0d0d0 0,#c6c6c6 25%,#bcbcbc 65%,#a4a4a4 100%);box-shadow:inset -3px 0 2px -1px #8c8c8c, inset 4px 0 3px -2px #d6d6d6;"></div>
<span class="t" style="left:301.00px;top:315.79px;font-size:11px;line-height:14px;height:14px;color:#000;letter-spacing:-0.393px;">LJ_rgBIP10V</span>
<svg style="position:absolute;left:376px;top:320px" width="16" height="11" viewBox="0 0 16 11"><path d="M1.5 1.5 H14 M1.8 1.6 L8 9.6" stroke="#505050" stroke-width="1" fill="none"/><path d="M14 1.8 L8.2 9.8" stroke="#e6e6e6" stroke-width="1.2" fill="none"/></svg>
<div style="position:absolute;left:407.5px;top:313px;width:58.5px;height:15px;box-sizing:content-box;background:#b6b6b6;border-style:solid;border-width:4px;border-color:#989898 #b4b4b4 #b8b8b8 #969696;"></div>
<span class="t" style="left:412.30px;top:317.79px;font-size:11px;line-height:14px;height:14px;color:#7c7c7c;">0.000000</span>
<div style="position:absolute;left:482.5px;top:313px;width:252.5px;height:15px;box-sizing:content-box;background:#fbfbfb;border-style:solid;border-width:4px;border-color:#8e8e8e #c0c0c0 #c2c2c2 #8c8c8c;"></div>
<span class="t" style="left:487.30px;top:317.79px;font-size:11px;line-height:14px;height:14px;color:#000;letter-spacing:1.875px;">y=l</span>
<div style="position:absolute;left:750px;top:313px;width:70px;height:15px;box-sizing:content-box;background:#b6b6b6;border-style:solid;border-width:4px;border-color:#989898 #b4b4b4 #b8b8b8 #969696;"></div>
<span class="t" style="left:754.80px;top:317.79px;font-size:11px;line-height:14px;height:14px;color:#7c7c7c;">0.000000</span>
<div class="led off" style="left:839.3px;top:315.5px"></div>
<span class="t" style="right:756.50px;top:340.89px;font-size:11px;line-height:14px;height:14px;color:#000;">12</span>
<div style="position:absolute;left:177px;top:336px;width:37px;height:15px;box-sizing:content-box;background:#fbfbfb;border-style:solid;border-width:4px;border-color:#8e8e8e #c0c0c0 #c2c2c2 #8c8c8c;"></div>
<span class="t" style="left:181.80px;top:340.79px;font-size:11px;line-height:14px;height:14px;color:#000;">12</span>
<div style="position:absolute;left:232px;top:336px;width:37px;height:15px;box-sizing:content-box;background:#fbfbfb;border-style:solid;border-width:4px;border-color:#8e8e8e #c0c0c0 #c2c2c2 #8c8c8c;"></div>
<span class="t" style="left:236.80px;top:340.79px;font-size:11px;line-height:14px;height:14px;color:#000;">199</span>
<div style="position:absolute;left:288px;top:336px;width:109px;height:22px;background:linear-gradient(180deg,#d0d0d0 0,#c6c6c6 25%,#bcbcbc 65%,#a4a4a4 100%);box-shadow:inset -3px 0 2px -1px #8c8c8c, inset 4px 0 3px -2px #d6d6d6;"></div>
<span class="t" style="left:301.00px;top:338.79px;font-size:11px;line-height:14px;height:14px;color:#000;letter-spacing:-0.393px;">LJ_rgBIP10V</span>
<svg style="position:absolute;left:376px;top:343px" width="16" height="11" viewBox="0 0 16 11"><path d="M1.5 1.5 H14 M1.8 1.6 L8 9.6" stroke="#505050" stroke-width="1" fill="none"/><path d="M14 1.8 L8.2 9.8" stroke="#e6e6e6" stroke-width="1.2" fill="none"/></svg>
<div style="position:absolute;left:407.5px;top:336px;width:58.5px;height:15px;box-sizing:content-box;background:#b6b6b6;border-style:solid;border-width:4px;border-color:#989898 #b4b4b4 #b8b8b8 #969696;"></div>
<span class="t" style="left:412.30px;top:340.79px;font-size:11px;line-height:14px;height:14px;color:#7c7c7c;">0.000000</span>
<div style="position:absolute;left:482.5px;top:336px;width:252.5px;height:15px;box-sizing:content-box;background:#fbfbfb;border-style:solid;border-width:4px;border-color:#8e8e8e #c0c0c0 #c2c2c2 #8c8c8c;"></div>
<span class="t" style="left:487.30px;top:340.79px;font-size:11px;line-height:14px;height:14px;color:#000;letter-spacing:-0.365px;">y=m</span>
<div style="position:absolute;left:750px;top:336px;width:70px;height:15px;box-sizing:content-box;background:#b6b6b6;border-style:solid;border-width:4px;border-color:#989898 #b4b4b4 #b8b8b8 #969696;"></div>
<span class="t" style="left:754.80px;top:340.79px;font-size:11px;line-height:14px;height:14px;color:#7c7c7c;">0.000000</span>
<div class="led off" style="left:839.3px;top:338.5px"></div>
<span class="t" style="right:756.50px;top:363.89px;font-size:11px;line-height:14px;height:14px;color:#000;">13</span>
<div style="position:absolute;left:177px;top:359px;width:37px;height:15px;box-sizing:content-box;background:#fbfbfb;border-style:solid;border-width:4px;border-color:#8e8e8e #c0c0c0 #c2c2c2 #8c8c8c;"></div>
<span class="t" style="left:181.80px;top:363.79px;font-size:11px;line-height:14px;height:14px;color:#000;">13</span>
<div style="position:absolute;left:232px;top:359px;width:37px;height:15px;box-sizing:content-box;background:#fbfbfb;border-style:solid;border-width:4px;border-color:#8e8e8e #c0c0c0 #c2c2c2 #8c8c8c;"></div>
<span class="t" style="left:236.80px;top:363.79px;font-size:11px;line-height:14px;height:14px;color:#000;">199</span>
<div style="position:absolute;left:288px;top:359px;width:109px;height:22px;background:linear-gradient(180deg,#d0d0d0 0,#c6c6c6 25%,#bcbcbc 65%,#a4a4a4 100%);box-shadow:inset -3px 0 2px -1px #8c8c8c, inset 4px 0 3px -2px #d6d6d6;"></div>
<span class="t" style="left:301.00px;top:361.79px;font-size:11px;line-height:14px;height:14px;color:#000;letter-spacing:-0.393px;">LJ_rgBIP10V</span>
<svg style="position:absolute;left:376px;top:366px" width="16" height="11" viewBox="0 0 16 11"><path d="M1.5 1.5 H14 M1.8 1.6 L8 9.6" stroke="#505050" stroke-width="1" fill="none"/><path d="M14 1.8 L8.2 9.8" stroke="#e6e6e6" stroke-width="1.2" fill="none"/></svg>
<div style="position:absolute;left:407.5px;top:359px;width:58.5px;height:15px;box-sizing:content-box;background:#b6b6b6;border-style:solid;border-width:4px;border-color:#989898 #b4b4b4 #b8b8b8 #969696;"></div>
<span class="t" style="left:412.30px;top:363.79px;font-size:11px;line-height:14px;height:14px;color:#7c7c7c;">0.000000</span>
<div style="position:absolute;left:482.5px;top:359px;width:252.5px;height:15px;box-sizing:content-box;background:#fbfbfb;border-style:solid;border-width:4px;border-color:#8e8e8e #c0c0c0 #c2c2c2 #8c8c8c;"></div>
<span class="t" style="left:487.30px;top:363.79px;font-size:11px;line-height:14px;height:14px;color:#000;letter-spacing:0.651px;">y=n</span>
<div style="position:absolute;left:750px;top:359px;width:70px;height:15px;box-sizing:content-box;background:#b6b6b6;border-style:solid;border-width:4px;border-color:#989898 #b4b4b4 #b8b8b8 #969696;"></div>
<span class="t" style="left:754.80px;top:363.79px;font-size:11px;line-height:14px;height:14px;color:#7c7c7c;">0.000000</span>
<div class="led off" style="left:839.3px;top:361.6px"></div>
<span class="t" style="right:756.50px;top:386.89px;font-size:11px;line-height:14px;height:14px;color:#000;">14</span>
<div style="position:absolute;left:177px;top:382px;width:37px;height:15px;box-sizing:content-box;background:#fbfbfb;border-style:solid;border-width:4px;border-color:#8e8e8e #c0c0c0 #c2c2c2 #8c8c8c;"></div>
<span class="t" style="left:181.80px;top:386.79px;font-size:11px;line-height:14px;height:14px;color:#000;">14</span>
<div style="position:absolute;left:232px;top:382px;width:37px;height:15px;box-sizing:content-box;background:#fbfbfb;border-style:solid;border-width:4px;border-color:#8e8e8e #c0c0c0 #c2c2c2 #8c8c8c;"></div>
<span class="t" style="left:236.80px;top:386.79px;font-size:11px;line-height:14px;height:14px;color:#000;">199</span>
<div style="position:absolute;left:288px;top:382px;width:109px;height:22px;background:linear-gradient(180deg,#d0d0d0 0,#c6c6c6 25%,#bcbcbc 65%,#a4a4a4 100%);box-shadow:inset -3px 0 2px -1px #8c8c8c, inset 4px 0 3px -2px #d6d6d6;"></div>
<span class="t" style="left:301.00px;top:384.79px;font-size:11px;line-height:14px;height:14px;color:#000;letter-spacing:-0.393px;">LJ_rgBIP10V</span>
<svg style="position:absolute;left:376px;top:389px" width="16" height="11" viewBox="0 0 16 11"><path d="M1.5 1.5 H14 M1.8 1.6 L8 9.6" stroke="#505050" stroke-width="1" fill="none"/><path d="M14 1.8 L8.2 9.8" stroke="#e6e6e6" stroke-width="1.2" fill="none"/></svg>
<div style="position:absolute;left:407.5px;top:382px;width:58.5px;height:15px;box-sizing:content-box;background:#b6b6b6;border-style:solid;border-width:4px;border-color:#989898 #b4b4b4 #b8b8b8 #969696;"></div>
<span class="t" style="left:412.30px;top:386.79px;font-size:11px;line-height:14px;height:14px;color:#7c7c7c;">0.000000</span>
<div style="position:absolute;left:482.5px;top:382px;width:252.5px;height:15px;box-sizing:content-box;background:#fbfbfb;border-style:solid;border-width:4px;border-color:#8e8e8e #c0c0c0 #c2c2c2 #8c8c8c;"></div>
<span class="t" style="left:487.30px;top:386.79px;font-size:11px;line-height:14px;height:14px;color:#000;letter-spacing:0.651px;">y=o</span>
<div style="position:absolute;left:750px;top:382px;width:70px;height:15px;box-sizing:content-box;background:#b6b6b6;border-style:solid;border-width:4px;border-color:#989898 #b4b4b4 #b8b8b8 #969696;"></div>
<span class="t" style="left:754.80px;top:386.79px;font-size:11px;line-height:14px;height:14px;color:#7c7c7c;">0.000000</span>
<div class="led off" style="left:839.3px;top:384.6px"></div>
<span class="t" style="right:756.50px;top:409.89px;font-size:11px;line-height:14px;height:14px;color:#000;">15</span>
<div style="position:absolute;left:177px;top:405px;width:37px;height:15px;box-sizing:content-box;background:#fbfbfb;border-style:solid;border-width:4px;border-color:#8e8e8e #c0c0c0 #c2c2c2 #8c8c8c;"></div>
<span class="t" style="left:181.80px;top:409.79px;font-size:11px;line-height:14px;height:14px;color:#000;">15</span>
<div style="position:absolute;left:232px;top:405px;width:37px;height:15px;box-sizing:content-box;background:#fbfbfb;border-style:solid;border-width:4px;border-color:#8e8e8e #c0c0c0 #c2c2c2 #8c8c8c;"></div>
<span class="t" style="left:236.80px;top:409.79px;font-size:11px;line-height:14px;height:14px;color:#000;">199</span>
<div style="position:absolute;left:288px;top:405px;width:109px;height:22px;background:linear-gradient(180deg,#d0d0d0 0,#c6c6c6 25%,#bcbcbc 65%,#a4a4a4 100%);box-shadow:inset -3px 0 2px -1px #8c8c8c, inset 4px 0 3px -2px #d6d6d6;"></div>
<span class="t" style="left:301.00px;top:407.79px;font-size:11px;line-height:14px;height:14px;color:#000;letter-spacing:-0.393px;">LJ_rgBIP10V</span>
<svg style="position:absolute;left:376px;top:412px" width="16" height="11" viewBox="0 0 16 11"><path d="M1.5 1.5 H14 M1.8 1.6 L8 9.6" stroke="#505050" stroke-width="1" fill="none"/><path d="M14 1.8 L8.2 9.8" stroke="#e6e6e6" stroke-width="1.2" fill="none"/></svg>
<div style="position:absolute;left:407.5px;top:405px;width:58.5px;height:15px;box-sizing:content-box;background:#b6b6b6;border-style:solid;border-width:4px;border-color:#989898 #b4b4b4 #b8b8b8 #969696;"></div>
<span class="t" style="left:412.30px;top:409.79px;font-size:11px;line-height:14px;height:14px;color:#7c7c7c;">0.000000</span>
<div style="position:absolute;left:482.5px;top:405px;width:252.5px;height:15px;box-sizing:content-box;background:#fbfbfb;border-style:solid;border-width:4px;border-color:#8e8e8e #c0c0c0 #c2c2c2 #8c8c8c;"></div>
<span class="t" style="left:487.30px;top:409.79px;font-size:11px;line-height:14px;height:14px;color:#000;letter-spacing:0.651px;">y=p</span>
<div style="position:absolute;left:750px;top:405px;width:70px;height:15px;box-sizing:content-box;background:#b6b6b6;border-style:solid;border-width:4px;border-color:#989898 #b4b4b4 #b8b8b8 #969696;"></div>
<span class="t" style="left:754.80px;top:409.79px;font-size:11px;line-height:14px;height:14px;color:#7c7c7c;">0.000000</span>
<div class="led off" style="left:839.3px;top:407.7px"></div>
<div style="position:absolute;left:19.5px;top:601px;width:775.5px;height:328.5px;background:linear-gradient(90deg,#d6d6d6 0,#d2d2d2 9px,#c4c4c4 13px,#c4c4c4 760px,#b8b8b8 765px,#7e7e7e 775px);box-shadow:inset 0 2px 0 0 #dadada, inset 0 -1px 0 0 #8a8a8a;"></div>
<div style="position:absolute;left:20.5px;top:929.5px;width:775px;height:9px;background:linear-gradient(180deg,#a4a4a4 0,#a8a8a8 55%,#b3b3b3 100%);"></div>
<div style="position:absolute;left:83px;top:610px;width:688px;height:281px;background:#000;overflow:hidden;"></div>
<svg style="position:absolute;left:83px;top:610px" width="688" height="281" viewBox="83 610 688 281" shape-rendering="crispEdges"><rect x="83" y="613" width="688" height="1" fill="#0b2e0b"/><rect x="83" y="616" width="688" height="1" fill="#0b2e0b"/><rect x="83" y="618" width="688" height="1" fill="#0b2e0b"/><rect x="83" y="620" width="688" height="1" fill="#0b2e0b"/><rect x="83" y="623" width="688" height="1" fill="#0b2e0b"/><rect x="83" y="625" width="688" height="1" fill="#0b2e0b"/><rect x="83" y="627" width="688" height="1" fill="#0b2e0b"/><rect x="83" y="630" width="688" height="1" fill="#0b2e0b"/><rect x="83" y="632" width="688" height="1" fill="#0b2e0b"/><rect x="83" y="634" width="688" height="1" fill="#0b2e0b"/><rect x="83" y="637" width="688" height="1" fill="#0b2e0b"/><rect x="83" y="639" width="688" height="1" fill="#0b2e0b"/><rect x="83" y="641" width="688" height="1" fill="#0b2e0b"/><rect x="83" y="644" width="688" height="1" fill="#0b2e0b"/><rect x="83" y="646" width="688" height="1" fill="#0b2e0b"/><rect x="83" y="648" width="688" height="1" fill="#0b2e0b"/><rect x="83" y="651" width="688" height="1" fill="#0b2e0b"/><rect x="83" y="653" width="688" height="1" fill="#0b2e0b"/><rect x="83" y="655" width="688" height="1" fill="#0b2e0b"/><rect x="83" y="658" width="688" height="1" fill="#0b2e0b"/><rect x="83" y="660" width="688" height="1" fill="#0b2e0b"/><rect x="83" y="662" width="688" height="1" fill="#0b2e0b"/><rect x="83" y="664" width="688" height="1" fill="#0b2e0b"/><rect x="83" y="667" width="688" height="1" fill="#0b2e0b"/><rect x="83" y="669" width="688" height="1" fill="#0b2e0b"/><rect x="83" y="671" width="688" height="1" fill="#0b2e0b"/><rect x="83" y="674" width="688" height="1" fill="#0b2e0b"/><rect x="83" y="676" width="688" height="1" fill="#0b2e0b"/><rect x="83" y="678" width="688" height="1" fill="#0b2e0b"/><rect x="83" y="681" width="688" height="1" fill="#0b2e0b"/><rect x="83" y="683" width="688" height="1" fill="#0b2e0b"/><rect x="83" y="685" width="688" height="1" fill="#0b2e0b"/><rect x="83" y="688" width="688" height="1" fill="#0b2e0b"/><rect x="83" y="690" width="688" height="1" fill="#0b2e0b"/><rect x="83" y="692" width="688" height="1" fill="#0b2e0b"/><rect x="83" y="695" width="688" height="1" fill="#0b2e0b"/><rect x="83" y="697" width="688" height="1" fill="#0b2e0b"/><rect x="83" y="699" width="688" height="1" fill="#0b2e0b"/><rect x="83" y="702" width="688" height="1" fill="#0b2e0b"/><rect x="83" y="704" width="688" height="1" fill="#0b2e0b"/><rect x="83" y="706" width="688" height="1" fill="#0b2e0b"/><rect x="83" y="709" width="688" height="1" fill="#0b2e0b"/><rect x="83" y="711" width="688" height="1" fill="#0b2e0b"/><rect x="83" y="713" width="688" height="1" fill="#0b2e0b"/><rect x="83" y="716" width="688" height="1" fill="#0b2e0b"/><rect x="83" y="718" width="688" height="1" fill="#0b2e0b"/><rect x="83" y="720" width="688" height="1" fill="#0b2e0b"/><rect x="83" y="723" width="688" height="1" fill="#0b2e0b"/><rect x="83" y="725" width="688" height="1" fill="#0b2e0b"/><rect x="83" y="727" width="688" height="1" fill="#0b2e0b"/><rect x="83" y="730" width="688" height="1" fill="#0b2e0b"/><rect x="83" y="732" width="688" height="1" fill="#0b2e0b"/><rect x="83" y="734" width="688" height="1" fill="#0b2e0b"/><rect x="83" y="737" width="688" height="1" fill="#0b2e0b"/><rect x="83" y="739" width="688" height="1" fill="#0b2e0b"/><rect x="83" y="741" width="688" height="1" fill="#0b2e0b"/><rect x="83" y="744" width="688" height="1" fill="#0b2e0b"/><rect x="83" y="746" width="688" height="1" fill="#0b2e0b"/><rect x="83" y="748" width="688" height="1" fill="#0b2e0b"/><rect x="83" y="750" width="688" height="1" fill="#0b2e0b"/><rect x="83" y="753" width="688" height="1" fill="#0b2e0b"/><rect x="83" y="755" width="688" height="1" fill="#0b2e0b"/><rect x="83" y="757" width="688" height="1" fill="#0b2e0b"/><rect x="83" y="760" width="688" height="1" fill="#0b2e0b"/><rect x="83" y="762" width="688" height="1" fill="#0b2e0b"/><rect x="83" y="764" width="688" height="1" fill="#0b2e0b"/><rect x="83" y="767" width="688" height="1" fill="#0b2e0b"/><rect x="83" y="769" width="688" height="1" fill="#0b2e0b"/><rect x="83" y="771" width="688" height="1" fill="#0b2e0b"/><rect x="83" y="774" width="688" height="1" fill="#0b2e0b"/><rect x="83" y="776" width="688" height="1" fill="#0b2e0b"/><rect x="83" y="778" width="688" height="1" fill="#0b2e0b"/><rect x="83" y="781" width="688" height="1" fill="#0b2e0b"/><rect x="83" y="783" width="688" height="1" fill="#0b2e0b"/><rect x="83" y="785" width="688" height="1" fill="#0b2e0b"/><rect x="83" y="788" width="688" height="1" fill="#0b2e0b"/><rect x="83" y="790" width="688" height="1" fill="#0b2e0b"/><rect x="83" y="792" width="688" height="1" fill="#0b2e0b"/><rect x="83" y="795" width="688" height="1" fill="#0b2e0b"/><rect x="83" y="797" width="688" height="1" fill="#0b2e0b"/><rect x="83" y="799" width="688" height="1" fill="#0b2e0b"/><rect x="83" y="802" width="688" height="1" fill="#0b2e0b"/><rect x="83" y="804" width="688" height="1" fill="#0b2e0b"/><rect x="83" y="806" width="688" height="1" fill="#0b2e0b"/><rect x="83" y="809" width="688" height="1" fill="#0b2e0b"/><rect x="83" y="811" width="688" height="1" fill="#0b2e0b"/><rect x="83" y="813" width="688" height="1" fill="#0b2e0b"/><rect x="83" y="816" width="688" height="1" fill="#0b2e0b"/><rect x="83" y="818" width="688" height="1" fill="#0b2e0b"/><rect x="83" y="820" width="688" height="1" fill="#0b2e0b"/><rect x="83" y="823" width="688" height="1" fill="#0b2e0b"/><rect x="83" y="825" width="688" height="1" fill="#0b2e0b"/><rect x="83" y="827" width="688" height="1" fill="#0b2e0b"/><rect x="83" y="830" width="688" height="1" fill="#0b2e0b"/><rect x="83" y="832" width="688" height="1" fill="#0b2e0b"/><rect x="83" y="834" width="688" height="1" fill="#0b2e0b"/><rect x="83" y="837" width="688" height="1" fill="#0b2e0b"/><rect x="83" y="839" width="688" height="1" fill="#0b2e0b"/><rect x="83" y="841" width="688" height="1" fill="#0b2e0b"/><rect x="83" y="844" width="688" height="1" fill="#0b2e0b"/><rect x="83" y="846" width="688" height="1" fill="#0b2e0b"/><rect x="83" y="848" width="688" height="1" fill="#0b2e0b"/><rect x="83" y="850" width="688" height="1" fill="#0b2e0b"/><rect x="83" y="853" width="688" height="1" fill="#0b2e0b"/><rect x="83" y="855" width="688" height="1" fill="#0b2e0b"/><rect x="83" y="857" width="688" height="1" fill="#0b2e0b"/><rect x="83" y="860" width="688" height="1" fill="#0b2e0b"/><rect x="83" y="862" width="688" height="1" fill="#0b2e0b"/><rect x="83" y="864" width="688" height="1" fill="#0b2e0b"/><rect x="83" y="867" width="688" height="1" fill="#0b2e0b"/><rect x="83" y="869" width="688" height="1" fill="#0b2e0b"/><rect x="83" y="871" width="688" height="1" fill="#0b2e0b"/><rect x="83" y="874" width="688" height="1" fill="#0b2e0b"/><rect x="83" y="876" width="688" height="1" fill="#0b2e0b"/><rect x="83" y="878" width="688" height="1" fill="#0b2e0b"/><rect x="83" y="881" width="688" height="1" fill="#0b2e0b"/><rect x="83" y="883" width="688" height="1" fill="#0b2e0b"/><rect x="83" y="885" width="688" height="1" fill="#0b2e0b"/><rect x="83" y="888" width="688" height="1" fill="#0b2e0b"/><rect x="83" y="890" width="688" height="1" fill="#0b2e0b"/><rect x="92" y="610" width="1" height="281" fill="#0d350d"/><rect x="100" y="610" width="1" height="281" fill="#0d350d"/><rect x="109" y="610" width="1" height="281" fill="#0d350d"/><rect x="117" y="610" width="1" height="281" fill="#0d350d"/><rect x="135" y="610" width="1" height="281" fill="#0d350d"/><rect x="143" y="610" width="1" height="281" fill="#0d350d"/><rect x="152" y="610" width="1" height="281" fill="#0d350d"/><rect x="160" y="610" width="1" height="281" fill="#0d350d"/><rect x="178" y="610" width="1" height="281" fill="#0d350d"/><rect x="186" y="610" width="1" height="281" fill="#0d350d"/><rect x="195" y="610" width="1" height="281" fill="#0d350d"/><rect x="203" y="610" width="1" height="281" fill="#0d350d"/><rect x="221" y="610" width="1" height="281" fill="#0d350d"/><rect x="229" y="610" width="1" height="281" fill="#0d350d"/><rect x="238" y="610" width="1" height="281" fill="#0d350d"/><rect x="246" y="610" width="1" height="281" fill="#0d350d"/><rect x="264" y="610" width="1" height="281" fill="#0d350d"/><rect x="272" y="610" width="1" height="281" fill="#0d350d"/><rect x="281" y="610" width="1" height="281" fill="#0d350d"/><rect x="289" y="610" width="1" height="281" fill="#0d350d"/><rect x="307" y="610" width="1" height="281" fill="#0d350d"/><rect x="315" y="610" width="1" height="281" fill="#0d350d"/><rect x="324" y="610" width="1" height="281" fill="#0d350d"/><rect x="332" y="610" width="1" height="281" fill="#0d350d"/><rect x="350" y="610" width="1" height="281" fill="#0d350d"/><rect x="358" y="610" width="1" height="281" fill="#0d350d"/><rect x="367" y="610" width="1" height="281" fill="#0d350d"/><rect x="375" y="610" width="1" height="281" fill="#0d350d"/><rect x="393" y="610" width="1" height="281" fill="#0d350d"/><rect x="401" y="610" width="1" height="281" fill="#0d350d"/><rect x="410" y="610" width="1" height="281" fill="#0d350d"/><rect x="418" y="610" width="1" height="281" fill="#0d350d"/><rect x="436" y="610" width="1" height="281" fill="#0d350d"/><rect x="444" y="610" width="1" height="281" fill="#0d350d"/><rect x="453" y="610" width="1" height="281" fill="#0d350d"/><rect x="461" y="610" width="1" height="281" fill="#0d350d"/><rect x="479" y="610" width="1" height="281" fill="#0d350d"/><rect x="487" y="610" width="1" height="281" fill="#0d350d"/><rect x="496" y="610" width="1" height="281" fill="#0d350d"/><rect x="504" y="610" width="1" height="281" fill="#0d350d"/><rect x="522" y="610" width="1" height="281" fill="#0d350d"/><rect x="530" y="610" width="1" height="281" fill="#0d350d"/><rect x="539" y="610" width="1" height="281" fill="#0d350d"/><rect x="547" y="610" width="1" height="281" fill="#0d350d"/><rect x="565" y="610" width="1" height="281" fill="#0d350d"/><rect x="573" y="610" width="1" height="281" fill="#0d350d"/><rect x="582" y="610" width="1" height="281" fill="#0d350d"/><rect x="590" y="610" width="1" height="281" fill="#0d350d"/><rect x="608" y="610" width="1" height="281" fill="#0d350d"/><rect x="616" y="610" width="1" height="281" fill="#0d350d"/><rect x="625" y="610" width="1" height="281" fill="#0d350d"/><rect x="633" y="610" width="1" height="281" fill="#0d350d"/><rect x="651" y="610" width="1" height="281" fill="#0d350d"/><rect x="659" y="610" width="1" height="281" fill="#0d350d"/><rect x="668" y="610" width="1" height="281" fill="#0d350d"/><rect x="676" y="610" width="1" height="281" fill="#0d350d"/><rect x="694" y="610" width="1" height="281" fill="#0d350d"/><rect x="702" y="610" width="1" height="281" fill="#0d350d"/><rect x="711" y="610" width="1" height="281" fill="#0d350d"/><rect x="719" y="610" width="1" height="281" fill="#0d350d"/><rect x="737" y="610" width="1" height="281" fill="#0d350d"/><rect x="745" y="610" width="1" height="281" fill="#0d350d"/><rect x="754" y="610" width="1" height="281" fill="#0d350d"/><rect x="762" y="610" width="1" height="281" fill="#0d350d"/><rect x="126" y="610" width="1" height="281" fill="#1c6a1c"/><rect x="169" y="610" width="1" height="281" fill="#1c6a1c"/><rect x="212" y="610" width="1" height="281" fill="#1c6a1c"/><rect x="255" y="610" width="1" height="281" fill="#1c6a1c"/><rect x="298" y="610" width="1" height="281" fill="#1c6a1c"/><rect x="341" y="610" width="1" height="281" fill="#1c6a1c"/><rect x="384" y="610" width="1" height="281" fill="#1c6a1c"/><rect x="427" y="610" width="1" height="281" fill="#1c6a1c"/><rect x="470" y="610" width="1" height="281" fill="#1c6a1c"/><rect x="513" y="610" width="1" height="281" fill="#1c6a1c"/><rect x="556" y="610" width="1" height="281" fill="#1c6a1c"/><rect x="599" y="610" width="1" height="281" fill="#1c6a1c"/><rect x="642" y="610" width="1" height="281" fill="#1c6a1c"/><rect x="685" y="610" width="1" height="281" fill="#1c6a1c"/><rect x="728" y="610" width="1" height="281" fill="#1c6a1c"/><rect x="83" y="704" width="688" height="1" fill="#1c6a1c"/><rect x="83" y="797" width="688" height="1" fill="#1c6a1c"/><polyline points="83.0,759.5 83.5,762.5 84.0,765.5 84.5,768.5 85.0,771.6 85.5,774.8 86.0,772.9 86.5,767.7 87.0,762.5 87.5,759.4 88.0,756.2 88.5,753.1 89.0,752.6 89.5,752.8 90.0,753.0 90.5,753.1 91.0,753.2 91.5,753.3 92.0,753.4 92.5,753.5 93.0,756.2 93.5,759.0 94.0,761.8 94.5,764.5 95.0,761.7 95.5,759.0 96.0,756.2 96.5,754.0 97.0,754.2 97.5,754.3 98.0,754.5 98.5,754.2 99.0,754.0 99.5,753.8 100.0,754.0 100.5,754.1 101.0,753.8 101.5,753.7 102.0,754.0 102.5,754.5 103.0,755.1 103.5,755.0 104.0,754.7 104.5,754.3 105.0,754.0 105.5,754.1 106.0,754.4 106.5,754.7 107.0,754.7 107.5,754.3 108.0,754.0 108.5,753.9 109.0,754.1 109.5,754.5 110.0,754.7 110.5,754.6 111.0,754.4 111.5,754.4 112.0,754.7 112.5,755.3 113.0,755.8 113.5,756.0 114.0,755.8 114.5,755.5 115.0,755.4 115.5,755.6 116.0,755.9 116.5,756.1 117.0,756.0 117.5,755.6 118.0,755.4 118.5,755.6 119.0,756.2 119.5,756.8 120.0,757.2 120.5,757.2 121.0,757.1 121.5,757.2 122.0,757.5 122.5,757.6 123.0,757.7 123.5,757.4 124.0,756.8 124.5,756.3 125.0,756.1 125.5,756.2 126.0,756.9 126.5,757.7 127.0,758.1 127.5,758.4 128.0,758.8 128.5,758.5 129.0,758.4 129.5,758.3 130.0,757.9 130.5,757.1 131.0,756.2 131.5,756.5 132.0,757.1 132.5,757.9 133.0,758.7 133.5,759.1 134.0,759.3 134.5,759.5 135.0,760.0 135.5,760.8 136.0,761.7 136.5,762.2 137.0,762.4 137.5,760.9 138.0,759.5 138.5,758.4 139.0,757.5 139.5,758.3 140.0,758.9 140.5,759.2 141.0,759.5 141.5,759.5 142.0,759.9 142.5,760.4 143.0,760.8 143.5,760.8 144.0,760.5 144.5,760.3 145.0,760.4 145.5,760.7 146.0,761.1 146.5,761.1 147.0,760.9 147.5,760.5 148.0,760.5 148.5,760.8 149.0,761.3 149.5,761.7 150.0,761.8 150.5,761.7 151.0,761.5 151.5,761.7 152.0,762.0 152.5,762.5 153.0,762.6 153.5,762.4 154.0,762.1 154.5,761.9 155.0,762.0 155.5,762.2 156.0,762.4 156.5,762.4 157.0,762.1 157.5,761.7 158.0,761.6 158.5,761.8 159.0,762.1 159.5,762.2 160.0,762.0 160.5,761.7 161.0,761.5 161.5,761.6 162.0,761.9 162.5,762.4 163.0,762.6 163.5,762.5 164.0,762.3 164.5,762.3 165.0,762.7 165.5,763.1 166.0,763.4 166.5,763.3 167.0,762.9 167.5,762.5 168.0,762.3 168.5,762.5 169.0,762.9 169.5,763.0 170.0,762.8 170.5,762.5 171.0,762.3 171.5,762.5 172.0,763.0 172.5,763.5 173.0,763.6 173.5,763.5 174.0,763.3 174.5,763.3 175.0,763.5 175.5,763.7 176.0,763.8 176.5,763.5 177.0,762.9 177.5,762.5 178.0,762.3 178.5,762.5 179.0,762.8 179.5,762.9 180.0,762.6 180.5,762.2 181.0,761.9 181.5,762.0 182.0,762.2 182.5,762.3 183.0,762.1 183.5,761.6 184.0,761.0 184.5,760.7 185.0,760.7 185.5,761.7 186.0,762.7 186.5,763.3 187.0,763.7 187.5,763.5 188.0,763.6 188.5,763.9 189.0,764.3 189.5,764.3 190.0,764.0 190.5,763.5 191.0,763.2 191.5,763.2 192.0,763.4 192.5,763.5 193.0,763.3 193.5,762.9 194.0,762.6 194.5,762.5 195.0,762.8 195.5,763.3 196.0,763.6 196.5,763.5 197.0,763.2 197.5,763.0 198.0,763.1 198.5,763.4 199.0,763.6 199.5,763.5 200.0,763.1 200.5,762.8 201.0,762.7 201.5,762.9 202.0,763.4 202.5,763.7 203.0,763.7 203.5,763.4 204.0,763.3 204.5,763.4 205.0,763.7 205.5,764.0 206.0,764.1 206.5,763.8 207.0,763.3 207.5,763.1 208.0,763.2 208.5,763.6 209.0,763.9 209.5,763.9 210.0,763.6 210.5,763.4 211.0,763.5 211.5,763.9 212.0,764.3 212.5,764.5 213.0,764.3 213.5,763.9 214.0,763.6 214.5,763.6 215.0,763.9 215.5,763.9 216.0,763.7 216.5,763.2 217.0,762.7 217.5,762.5 218.0,762.6 218.5,762.9 219.0,763.0 219.5,762.7 220.0,762.2 220.5,762.1 221.0,762.2 221.5,762.6 222.0,763.1 222.5,763.3 223.0,763.2 223.5,763.0 224.0,763.0 224.5,763.3 225.0,764.0 225.5,764.3 226.0,764.4 226.5,764.1 227.0,763.8 227.5,763.8 228.0,764.0 228.5,764.3 229.0,764.4 229.5,764.1 230.0,763.6 230.5,763.3 231.0,763.3 231.5,763.6 232.0,763.9 232.5,764.0 233.0,763.8 233.5,763.5 234.0,763.4 234.5,763.7 235.0,764.1 235.5,764.3 236.0,764.1 236.5,763.7 237.0,763.3 237.5,763.1 238.0,763.3 238.5,763.6 239.0,763.7 239.5,763.5 240.0,763.2 240.5,763.0 241.0,763.2 241.5,763.6 242.0,764.0 242.5,764.0 243.0,763.6 243.5,763.2 244.0,763.0 244.5,763.1 245.0,763.4 245.5,763.5 246.0,763.2 246.5,762.8 247.0,762.6 247.5,762.6 248.0,763.0 248.5,763.4 249.0,763.6 249.5,763.3 250.0,763.0 250.5,762.8 251.0,763.0 251.5,763.3 252.0,763.5 252.5,763.3 253.0,762.8 253.5,762.4 254.0,762.3 254.5,762.7 255.0,763.1 255.5,763.4 256.0,763.3 256.5,763.0 257.0,762.8 257.5,763.0 258.0,763.4 258.5,763.7 259.0,763.6 259.5,763.2 260.0,762.7 260.5,762.4 261.0,762.6 261.5,763.0 262.0,763.2 262.5,763.2 263.0,762.9 263.5,762.6 264.0,762.8 264.5,763.2 265.0,763.7 265.5,763.8 266.0,763.5 266.5,763.0 267.0,762.7 267.5,762.7 268.0,763.0 268.5,763.3 269.0,763.2 269.5,762.8 270.0,762.5 270.5,762.5 271.0,762.9 271.5,763.4 272.0,763.7 272.5,763.6 273.0,763.2 273.5,762.9 274.0,762.9 274.5,763.2 275.0,763.5 275.5,763.4 276.0,763.0 276.5,762.6 277.0,762.4 277.5,762.7 278.0,763.2 278.5,763.5 279.0,763.5 279.5,763.2 280.0,763.0 280.5,763.0 281.0,763.3 281.5,763.6 282.0,763.7 282.5,763.3 283.0,762.8 283.5,762.5 284.0,762.6 284.5,763.0 285.0,763.3 285.5,763.4 286.0,763.1 286.5,762.9 287.0,762.9 287.5,763.2 288.0,763.7 288.5,763.9 289.0,763.6 289.5,763.2 290.0,762.7 290.5,762.7 291.0,763.0 291.5,763.3 292.0,763.3 292.5,763.1 293.0,762.8 293.5,762.7 294.0,763.0 294.5,763.5 295.0,763.9 295.5,763.8 296.0,763.4 296.5,763.0 297.0,762.9 297.5,763.1 298.0,763.4 298.5,763.5 299.0,763.2 299.5,762.8 300.0,762.5 300.5,762.7 301.0,763.2 301.5,763.6 302.0,763.8 302.5,763.5 303.0,763.2 303.5,763.0 304.0,763.3 304.5,763.6 305.0,763.7 305.5,763.5 306.0,763.0 306.5,762.6 307.0,762.6 307.5,763.0 308.0,763.4 308.5,763.6 309.0,763.4 309.5,763.1 310.0,763.0 310.5,763.2 311.0,763.7 311.5,763.9 312.0,763.8 312.5,763.3 313.0,762.8 313.5,762.7 314.0,762.9 314.5,763.3 315.0,763.5 315.5,763.3 316.0,763.0 316.5,762.9 317.0,763.0 317.5,763.5 318.0,763.9 318.5,764.0 319.0,763.6 319.5,763.2 320.0,762.9 320.5,763.0 321.0,763.3 321.5,763.5 322.0,763.4 322.5,763.0 323.0,762.7 323.5,762.8 324.0,763.2 324.5,763.7 325.0,764.0 325.5,763.8 326.0,763.4 326.5,763.1 327.0,763.2 327.5,763.5 328.0,763.7 328.5,763.6 329.0,763.2 329.5,762.7 330.0,762.6 330.5,763.0 331.0,763.5 331.5,763.8 332.0,763.7 332.5,763.4 333.0,763.2 333.5,763.3 334.0,763.6 334.5,763.9 335.0,763.9 335.5,763.5 336.0,763.0 336.5,762.7 337.0,762.9 337.5,763.3 338.0,763.6 338.5,763.6 339.0,763.3 339.5,763.1 340.0,763.1 340.5,763.5 341.0,764.0 341.5,764.1 342.0,763.8 342.5,763.3 343.0,763.0 343.5,763.0 344.0,763.3 344.5,763.5 345.0,763.5 345.5,763.2 346.0,762.9 346.5,762.9 347.0,763.3 347.5,763.8 348.0,764.1 348.5,764.0 349.0,763.6 349.5,763.2 350.0,763.2 350.5,763.4 351.0,763.7 351.5,763.7 352.0,763.3 352.5,762.9 353.0,762.7 353.5,763.0 354.0,763.5 354.5,763.9 355.0,764.0 355.5,763.7 356.0,763.3 356.5,763.3 357.0,763.5 357.5,763.9 358.0,763.9 358.5,763.6 359.0,763.1 359.5,762.8 360.0,762.9 360.5,763.3 361.0,763.7 361.5,763.8 362.0,763.6 362.5,763.3 363.0,763.2 363.5,763.5 364.0,763.9 364.5,764.2 365.0,764.0 365.5,763.5 366.0,763.0 366.5,762.9 367.0,763.2 367.5,763.5 368.0,763.6 368.5,763.4 369.0,763.1 369.5,762.9 370.0,763.2 370.5,763.6 371.0,764.0 371.5,763.9 372.0,763.5 372.5,763.0 373.0,762.8 373.5,763.0 374.0,763.2 374.5,763.3 375.0,763.1 375.5,762.7 376.0,762.4 376.5,762.5 377.0,763.0 377.5,763.4 378.0,763.5 378.5,763.3 379.0,762.9 379.5,762.6 380.0,762.8 380.5,763.0 381.0,763.2 381.5,763.0 382.0,762.5 382.5,762.0 383.0,762.0 383.5,762.3 384.0,762.8 384.5,763.0 385.0,762.9 385.5,762.5 386.0,762.3 386.5,762.4 387.0,762.8 387.5,763.0 388.0,762.9 388.5,762.4 389.0,761.9 389.5,761.7 390.0,761.9 390.5,762.2 391.0,762.5 391.5,762.4 392.0,762.1 392.5,761.8 393.0,761.9 393.5,762.3 394.0,762.7 394.5,762.8 395.0,762.4 395.5,761.9 396.0,761.5 396.5,761.6 397.0,761.9 397.5,762.1 398.0,762.0 398.5,761.6 399.0,761.3 399.5,761.3 400.0,761.7 400.5,762.5 401.0,762.9 401.5,762.6 402.0,761.8 402.5,761.3 403.0,761.3 403.5,761.7 404.0,762.1 404.5,761.9 405.0,761.3 405.5,760.5 406.0,760.3 406.5,760.8 407.0,761.6 407.5,762.2 408.0,762.1 408.5,761.6 409.0,761.1 409.5,761.1 410.0,761.6 410.5,762.0 411.0,762.0 411.5,761.4 412.0,760.5 412.5,760.0 413.0,760.2 413.5,760.9 414.0,761.5 414.5,761.5 415.0,761.1 415.5,760.6 416.0,760.6 416.5,761.1 417.0,761.8 417.5,762.0 418.0,761.5 418.5,760.7 419.0,760.0 419.5,759.9 420.0,760.4 420.5,760.9 421.0,761.0 421.5,760.5 422.0,760.0 422.5,759.9 423.0,760.4 423.5,761.2 424.0,761.7 424.5,761.5 425.0,760.8 425.5,760.1 426.0,759.8 426.5,760.1 427.0,760.5 427.5,760.6 428.0,760.0 428.5,759.3 429.0,758.9 429.5,759.3 430.0,760.0 430.5,760.7 431.0,760.8 431.5,760.2 432.0,759.6 432.5,759.3 433.0,759.6 433.5,760.0 434.0,760.1 434.5,759.6 435.0,758.8 435.5,758.1 436.0,758.1 436.5,758.8 437.0,759.5 437.5,759.7 438.0,759.3 438.5,758.8 439.0,758.5 439.5,758.8 440.0,759.4 440.5,759.7 441.0,759.3 441.5,758.5 442.0,757.6 442.5,757.4 443.0,757.8 443.5,758.4 444.0,758.6 444.5,758.3 445.0,757.8 445.5,757.5 446.0,757.7 446.5,758.4 447.0,759.0 447.5,758.9 448.0,758.2 448.5,757.4 449.0,756.9 449.5,757.1 450.0,757.6 450.5,757.8 451.0,757.5 451.5,756.8 452.0,756.4 452.5,756.5 453.0,757.2 453.5,758.0 454.0,758.2 454.5,757.7 455.0,757.0 455.5,756.5 456.0,756.6 456.5,757.0 457.0,757.3 457.5,757.0 458.0,756.2 458.5,755.5 459.0,755.4 459.5,755.9 460.0,756.7 460.5,757.1 461.0,756.9 461.5,756.3 462.0,755.8 462.5,755.9 463.0,756.4 463.5,756.8 464.0,756.6 464.5,755.9 465.0,755.0 465.5,754.6 466.0,754.8 466.5,755.5 467.0,756.0 467.5,755.9 468.0,755.4 468.5,754.9 469.0,755.0 469.5,755.6 470.0,756.2 470.5,756.3 471.0,755.7 471.5,754.8 472.0,754.2 472.5,754.3 473.0,754.8 473.5,755.2 474.0,755.2 474.5,754.7 475.0,754.2 475.5,754.2 476.0,754.8 476.5,755.6 477.0,756.0 477.5,755.7 478.0,754.9 478.5,754.2 479.0,754.1 479.5,754.5 480.0,754.9 480.5,754.9 481.0,754.3 481.5,753.6 482.0,753.4 482.5,753.8 483.0,754.6 483.5,755.2 484.0,755.2 484.5,754.7 485.0,754.1 485.5,753.9 486.0,754.3 486.5,754.8 487.0,754.8 487.5,754.2 488.0,753.4 488.5,752.8 489.0,753.0 489.5,753.7 490.0,754.4 490.5,754.5 491.0,754.1 491.5,753.6 492.0,753.5 492.5,753.9 493.0,754.6 493.5,754.8 494.0,754.4 494.5,753.6 495.0,752.9 495.5,752.8 496.0,753.3 496.5,753.9 497.0,754.2 497.5,753.8 498.0,753.3 498.5,753.2 499.0,753.6 499.5,754.4 500.0,754.5 500.5,754.4 501.0,754.0 501.5,753.5 502.0,753.4 502.5,753.6 503.0,753.9 503.5,754.0 504.0,753.8 504.5,753.4 505.0,753.2 505.5,753.4 506.0,753.9 506.5,754.3 507.0,754.4 507.5,754.2 508.0,753.8 508.5,753.6 509.0,753.7 509.5,754.0 510.0,754.1 510.5,753.9 511.0,753.5 511.5,753.1 512.0,753.2 512.5,753.6 513.0,754.1 513.5,754.3 514.0,754.1 514.5,753.8 515.0,753.6 515.5,753.8 516.0,754.1 516.5,754.3 517.0,754.2 517.5,753.7 518.0,753.3 518.5,753.1 519.0,753.4 519.5,753.8 520.0,754.1 520.5,754.0 521.0,753.7 521.5,753.6 522.0,753.7 522.5,754.2 523.0,754.6 523.5,754.6 524.0,754.3 524.5,753.8 525.0,753.5 525.5,753.6 526.0,754.0 526.5,754.3 527.0,754.2 527.5,753.9 528.0,753.7 528.5,753.8 529.0,754.2 529.5,754.8 530.0,755.0 530.5,754.8 531.0,754.4 531.5,754.1 532.0,754.1 532.5,754.4 533.0,754.7 533.5,754.6 534.0,754.3 534.5,753.9 535.0,753.9 535.5,754.2 536.0,754.8 536.5,755.1 537.0,755.1 537.5,754.8 538.0,754.5 538.5,754.5 539.0,754.8 539.5,755.2 540.0,755.2 540.5,754.8 541.0,754.1 541.5,753.7 542.0,754.1 542.5,754.9 543.0,755.5 543.5,755.6 544.0,755.3 544.5,754.9 545.0,754.9 545.5,755.5 546.0,756.2 546.5,756.4 547.0,755.9 547.5,755.1 548.0,754.5 548.5,754.6 549.0,755.2 549.5,755.8 550.0,756.0 550.5,755.6 551.0,755.1 551.5,755.1 552.0,755.7 552.5,756.6 553.0,757.1 553.5,756.9 554.0,756.2 554.5,755.5 555.0,755.4 555.5,755.8 556.0,756.4 556.5,756.5 557.0,756.1 557.5,755.5 558.0,755.3 558.5,755.8 559.0,756.7 559.5,757.4 560.0,757.5 560.5,757.0 561.0,756.4 561.5,756.2 562.0,756.6 562.5,757.1 563.0,757.3 563.5,756.9 564.0,756.2 564.5,755.7 565.0,755.9 565.5,756.7 566.0,757.5 566.5,757.8 567.0,757.5 567.5,757.0 568.0,756.9 568.5,757.3 569.0,757.9 569.5,758.2 570.0,757.9 570.5,757.2 571.0,756.5 571.5,756.4 572.0,756.9 572.5,757.7 573.0,758.0 573.5,757.9 574.0,757.4 574.5,757.2 575.0,757.6 575.5,758.4 576.0,759.0 576.5,758.9 577.0,758.3 577.5,757.5 578.0,757.2 578.5,757.5 579.0,758.1 579.5,758.5 580.0,758.3 580.5,757.7 581.0,757.4 581.5,757.7 582.0,758.5 582.5,759.3 583.0,759.6 583.5,759.2 584.0,758.5 584.5,758.1 585.0,758.3 585.5,758.8 586.0,759.2 586.5,759.0 587.0,758.3 587.5,757.8 588.0,757.8 588.5,758.5 589.0,759.4 589.5,759.9 590.0,759.8 590.5,759.2 591.0,758.9 591.5,759.0 592.0,759.6 592.5,760.0 593.0,759.9 593.5,759.2 594.0,758.5 594.5,758.2 595.0,758.7 595.5,759.5 596.0,760.1 596.5,760.1 597.0,759.7 597.5,759.3 598.0,759.5 598.5,760.1 599.0,760.7 599.5,760.8 600.0,760.2 600.5,759.4 601.0,758.9 601.5,759.0 602.0,759.6 602.5,760.2 603.0,760.2 603.5,759.7 604.0,759.3 604.5,759.4 605.0,760.1 605.5,760.9 606.0,761.2 606.5,760.9 607.0,760.2 607.5,759.6 608.0,759.5 608.5,760.0 609.0,760.5 609.5,760.5 610.0,760.0 610.5,759.4 611.0,759.3 611.5,759.8 612.0,760.7 612.5,761.3 613.0,761.3 613.5,760.7 614.0,760.2 614.5,760.1 615.0,760.5 615.5,761.0 616.0,761.0 616.5,760.5 617.0,759.7 617.5,759.3 618.0,759.6 618.5,760.4 619.0,761.2 619.5,761.3 620.0,760.9 620.5,760.5 621.0,760.4 621.5,760.8 622.0,761.5 622.5,761.7 623.0,761.3 623.5,760.4 624.0,759.8 624.5,759.8 625.0,760.4 625.5,761.0 626.0,761.3 626.5,761.0 627.0,760.5 627.5,760.4 628.0,760.9 628.5,761.7 629.0,762.2 629.5,762.0 630.0,761.2 630.5,760.5 631.0,760.3 631.5,760.6 632.0,761.2 632.5,761.4 633.0,761.1 633.5,760.6 634.0,760.3 634.5,760.7 635.0,761.5 635.5,762.3 636.0,762.4 636.5,761.9 637.0,761.2 637.5,760.9 638.0,761.1 638.5,761.7 639.0,761.9 639.5,761.6 640.0,760.9 640.5,760.4 641.0,760.5 641.5,761.3 642.0,762.1 642.5,762.4 643.0,762.1 643.5,761.5 644.0,761.2 644.5,761.5 645.0,762.0 645.5,762.4 646.0,762.1 646.5,761.3 647.0,760.6 647.5,760.4 648.0,760.9 648.5,761.7 649.0,762.1 649.5,762.0 650.0,761.5 650.5,761.2 651.0,761.4 651.5,762.1 652.0,762.7 652.5,762.6 653.0,761.9 653.5,761.1 654.0,760.7 654.5,760.9 655.0,761.5 655.5,762.0 656.0,761.8 656.5,761.3 657.0,761.0 657.5,761.1 658.0,761.9 658.5,762.6 659.0,762.9 659.5,762.5 660.0,761.7 660.5,761.1 661.0,761.2 661.5,761.7 662.0,762.1 662.5,762.0 663.0,761.4 663.5,760.8 664.0,760.8 664.5,761.4 665.0,762.3 665.5,762.8 666.0,762.6 666.5,762.0 667.0,761.5 667.5,761.5 668.0,762.0 668.5,762.4 669.0,762.4 669.5,761.7 670.0,760.9 670.5,760.6 671.0,761.0 671.5,761.8 672.0,762.5 672.5,762.5 673.0,762.1 673.5,761.6 674.0,761.6 674.5,762.2 675.0,762.7 675.5,762.8 676.0,762.3 676.5,761.4 677.0,760.9 677.5,761.0 678.0,761.6 678.5,762.2 679.0,762.3 679.5,761.9 680.0,761.5 680.5,761.4 681.0,762.0 681.5,762.8 682.0,763.2 682.5,762.8 683.0,762.0 683.5,761.3 684.0,761.2 684.5,761.7 685.0,762.2 685.5,762.3 686.0,761.9 686.5,761.3 687.0,761.1 687.5,761.6 688.0,762.5 688.5,763.2 689.0,763.2 689.5,762.6 690.0,761.9 690.5,761.7 691.0,762.0 691.5,762.5 692.0,762.7 692.5,762.2 693.0,761.5 693.5,761.1 694.0,761.3 694.5,762.1 695.0,762.9 695.5,763.2 696.0,762.8 696.5,762.2 697.0,762.0 697.5,762.4 698.0,763.0 698.5,763.2 699.0,762.8 699.5,762.0 700.0,761.4 700.5,761.3 701.0,761.9 701.5,762.7 702.0,763.0 702.5,762.8 703.0,762.3 703.5,762.1 704.0,762.4 704.5,763.2 705.0,763.7 705.5,763.5 706.0,762.8 706.5,762.0 707.0,761.7 707.5,762.0 708.0,762.6 708.5,763.0 709.0,762.7 709.5,762.2 710.0,761.9 710.5,762.2 711.0,763.0 711.5,763.8 712.0,763.9 712.5,763.4 713.0,762.6 713.5,762.2 714.0,762.4 714.5,762.9 715.0,763.2 715.5,763.0 716.0,762.3 716.5,761.8 717.0,761.9 717.5,762.7 718.0,763.5 718.5,763.9 719.0,763.7 719.5,763.1 720.0,762.7 720.5,762.8 721.0,763.3 721.5,763.7 722.0,763.5 722.5,762.8 723.0,762.1 723.5,761.9 724.0,762.4 724.5,763.2 725.0,763.7 725.5,763.7 726.0,763.2 726.5,762.8 727.0,763.0 727.5,763.6 728.0,764.1 728.5,764.1 729.0,763.5 729.5,762.6 730.0,762.6 730.5,762.7 731.0,763.1 731.5,763.5 732.0,763.5 732.5,763.2 733.0,763.0 733.5,763.1 734.0,763.5 734.5,763.9 735.0,764.1 735.5,763.9 736.0,763.4 736.5,763.0 737.0,763.0 737.5,763.3 738.0,763.6 738.5,763.6 739.0,763.3 739.5,763.0 740.0,763.0 740.5,763.3 741.0,763.9 741.5,764.2 742.0,764.1 742.5,763.8 743.0,763.4 743.5,763.4 744.0,763.6 744.5,763.9 745.0,763.9 745.5,763.6 746.0,763.2 746.5,763.0 747.0,763.2 747.5,763.7 748.0,764.2 748.5,764.2 749.0,764.0 749.5,763.7 750.0,763.6 750.5,763.9 751.0,764.2 751.5,764.3 752.0,764.1 752.5,763.6 753.0,763.2 753.5,763.3 754.0,763.7 754.5,764.1 755.0,764.2 755.5,764.0 756.0,763.8 756.5,763.7 757.0,764.0 757.5,764.4" fill="none" stroke="#3fe03f" stroke-width="1.25" shape-rendering="auto"/><polyline points="83.0,776.1 83.5,780.9 84.0,785.7 84.5,790.5 85.0,796.8 85.5,803.0 86.0,801.6 86.5,795.0 87.0,788.5 87.5,784.5 88.0,780.6 88.5,779.0 89.0,779.0 89.5,779.0 90.0,779.0 90.5,779.0 91.0,779.0 91.5,779.0 92.0,779.0 92.5,780.3 93.0,781.6 93.5,782.9 94.0,784.2 94.5,785.5 95.0,784.1 95.5,782.6 96.0,781.2 96.5,780.0 97.0,780.1 97.5,780.2 98.0,780.2 98.5,780.3 99.0,780.4 99.5,780.4 100.0,780.8 100.5,780.6 101.0,780.3 101.5,780.0 102.0,780.0 102.5,780.1 103.0,780.3 103.5,780.3 104.0,780.1 104.5,779.9 105.0,779.8 105.5,780.1 106.0,780.4 106.5,780.7 107.0,780.7 107.5,780.6 108.0,780.4 108.5,780.4 109.0,780.7 109.5,780.9 110.0,781.1 110.5,781.0 111.0,780.8 111.5,780.8 112.0,780.9 112.5,781.2 113.0,781.5 113.5,781.5 114.0,781.4 114.5,781.2 115.0,781.1 115.5,781.2 116.0,781.4 116.5,781.5 117.0,781.4 117.5,781.2 118.0,781.0 118.5,781.1 119.0,781.3 119.5,781.6 120.0,781.8 120.5,781.7 121.0,781.6 121.5,781.5 122.0,781.6 122.5,781.8 123.0,781.9 123.5,781.9 124.0,781.6 124.5,781.4 125.0,781.4 125.5,781.5 126.0,781.8 126.5,782.0 127.0,782.0 127.5,781.8 128.0,781.7 128.5,781.9 129.0,782.1 129.5,782.3 130.0,782.3 130.5,782.2 131.0,781.9 131.5,781.8 132.0,782.0 132.5,782.2 133.0,782.4 133.5,782.4 134.0,782.3 134.5,782.2 135.0,782.3 135.5,782.6 136.0,782.9 136.5,783.0 137.0,783.0 137.5,782.7 138.0,782.6 138.5,782.7 139.0,782.9 139.5,782.9 140.0,782.7 140.5,782.3 141.0,782.0 141.5,781.8 142.0,781.9 142.5,782.2 143.0,782.5 143.5,782.6 144.0,782.5 144.5,782.4 145.0,782.5 145.5,782.7 146.0,783.0 146.5,783.0 147.0,782.9 147.5,782.7 148.0,782.7 148.5,782.9 149.0,783.3 149.5,783.6 150.0,783.7 150.5,783.6 151.0,783.5 151.5,783.5 152.0,783.7 152.5,784.0 153.0,784.0 153.5,783.9 154.0,783.6 154.5,783.5 155.0,783.5 155.5,783.7 156.0,784.0 156.5,784.0 157.0,783.9 157.5,783.8 158.0,783.8 158.5,784.0 159.0,784.3 159.5,784.5 160.0,784.4 160.5,784.2 161.0,784.0 161.5,784.0 162.0,784.2 162.5,784.4 163.0,784.4 163.5,784.3 164.0,784.1 164.5,784.1 165.0,784.3 165.5,784.6 166.0,784.9 166.5,784.9 167.0,784.7 167.5,784.5 168.0,784.5 168.5,784.7 169.0,784.8 169.5,784.9 170.0,784.8 170.5,784.6 171.0,784.4 171.5,784.6 172.0,784.8 172.5,785.1 173.0,785.2 173.5,785.1 174.0,784.9 174.5,784.8 175.0,784.9 175.5,785.1 176.0,785.2 176.5,785.1 177.0,784.8 177.5,784.6 178.0,784.6 178.5,784.7 179.0,785.0 179.5,785.1 180.0,785.0 180.5,784.8 181.0,784.8 181.5,784.9 182.0,785.1 182.5,785.3 183.0,785.3 183.5,785.0 184.0,784.8 184.5,784.6 185.0,784.7 185.5,784.9 186.0,785.1 186.5,785.0 187.0,784.8 187.5,784.7 188.0,784.8 188.5,785.0 189.0,785.3 189.5,785.3 190.0,785.2 190.5,784.9 191.0,784.8 191.5,784.8 192.0,785.0 192.5,785.1 193.0,785.0 193.5,784.8 194.0,784.6 194.5,784.7 195.0,784.9 195.5,785.2 196.0,785.3 196.5,785.2 197.0,785.0 197.5,784.9 198.0,784.9 198.5,785.1 199.0,785.2 199.5,785.2 200.0,785.0 200.5,785.0 201.0,785.0 201.5,785.0 202.0,785.0 202.5,785.0 203.0,785.0 203.5,785.0 204.0,785.0 204.5,785.0 205.0,785.0 205.5,784.9 206.0,784.9 206.5,784.9 207.0,784.9 207.5,784.9 208.0,784.9 208.5,784.9 209.0,784.9 209.5,784.9 210.0,784.9 210.5,784.9 211.0,784.9 211.5,784.9 212.0,784.9 212.5,784.9 213.0,784.9 213.5,784.9 214.0,784.9 214.5,784.9 215.0,784.9 215.5,784.8 216.0,784.8 216.5,784.8 217.0,784.8 217.5,784.8 218.0,784.8 218.5,784.8 219.0,784.8 219.5,784.8 220.0,784.8 220.5,784.8 221.0,784.8 221.5,784.8 222.0,784.8 222.5,784.8 223.0,784.8 223.5,784.8 224.0,784.8 224.5,784.8 225.0,784.8 225.5,784.7 226.0,784.7 226.5,784.7 227.0,784.7 227.5,784.7 228.0,784.7 228.5,784.7 229.0,784.7 229.5,784.7 230.0,784.7 230.5,784.7 231.0,784.7 231.5,784.7 232.0,784.7 232.5,784.7 233.0,784.7 233.5,784.7 234.0,784.7 234.5,784.7 235.0,784.6 235.5,784.6 236.0,784.6 236.5,784.6 237.0,784.6 237.5,784.6 238.0,784.6 238.5,784.6 239.0,784.6 239.5,784.6 240.0,784.6 240.5,784.6 241.0,784.6 241.5,784.6 242.0,784.6 242.5,784.6 243.0,784.6 243.5,784.6 244.0,784.6 244.5,784.6 245.0,784.5 245.5,784.5 246.0,784.5 246.5,784.5 247.0,784.5 247.5,784.5 248.0,784.5 248.5,784.5 249.0,784.5 249.5,784.5 250.0,784.5 250.5,784.5 251.0,784.5 251.5,784.5 252.0,784.5 252.5,784.5 253.0,784.5 253.5,784.5 254.0,784.5 254.5,784.5 255.0,784.5 255.5,784.5 256.0,784.5 256.5,784.5 257.0,784.5 257.5,784.5 258.0,784.5 258.5,784.5 259.0,784.5 259.5,784.5 260.0,784.5 260.5,784.5 261.0,784.5 261.5,784.5 262.0,784.5 262.5,784.5 263.0,784.5 263.5,784.5 264.0,784.5 264.5,784.5 265.0,784.5 265.5,784.5 266.0,784.5 266.5,784.5 267.0,784.5 267.5,784.5 268.0,784.5 268.5,784.5 269.0,784.5 269.5,784.5 270.0,784.5 270.5,784.5 271.0,784.5 271.5,784.5 272.0,784.5 272.5,784.5 273.0,784.5 273.5,784.5 274.0,784.5 274.5,784.5 275.0,784.5 275.5,784.5 276.0,784.5 276.5,784.5 277.0,784.5 277.5,784.5 278.0,784.5 278.5,784.5 279.0,784.5 279.5,784.5 280.0,784.5 280.5,784.5 281.0,784.5 281.5,784.5 282.0,784.5 282.5,784.5 283.0,784.5 283.5,784.5 284.0,784.5 284.5,784.5 285.0,784.5 285.5,784.5 286.0,784.5 286.5,784.5 287.0,784.5 287.5,784.5 288.0,784.5 288.5,784.5 289.0,784.5 289.5,784.5 290.0,784.5 290.5,784.5 291.0,784.5 291.5,784.5 292.0,784.5 292.5,784.5 293.0,784.5 293.5,784.5 294.0,784.5 294.5,784.5 295.0,784.5 295.5,784.5 296.0,784.5 296.5,784.5 297.0,784.5 297.5,784.5 298.0,784.5 298.5,784.5 299.0,784.5 299.5,784.5 300.0,784.5 300.5,784.5 301.0,784.5 301.5,784.5 302.0,784.5 302.5,784.5 303.0,784.5 303.5,784.5 304.0,784.5 304.5,784.5 305.0,784.5 305.5,784.5 306.0,784.5 306.5,784.5 307.0,784.5 307.5,784.5 308.0,784.5 308.5,784.5 309.0,784.5 309.5,784.5 310.0,784.5 310.5,784.5 311.0,784.9 311.5,785.1 312.0,785.0 312.5,784.5 313.0,784.0 313.5,783.8 314.0,784.0 314.5,784.4 315.0,784.6 315.5,784.4 316.0,784.1 316.5,783.9 317.0,784.1 317.5,784.5 318.0,784.9 318.5,784.9 319.0,784.6 319.5,784.1 320.0,783.8 320.5,783.9 321.0,784.2 321.5,784.4 322.0,784.2 322.5,783.8 323.0,783.5 323.5,783.6 324.0,784.0 324.5,784.5 325.0,784.7 325.5,784.5 326.0,784.1 326.5,783.8 327.0,783.9 327.5,784.1 328.0,784.3 328.5,784.2 329.0,783.7 329.5,783.3 330.0,783.2 330.5,783.5 331.0,784.0 331.5,784.3 332.0,784.2 332.5,783.9 333.0,783.6 333.5,783.7 334.0,784.0 334.5,784.3 335.0,784.2 335.5,783.8 336.0,783.3 336.5,783.0 337.0,783.2 337.5,783.5 338.0,783.8 338.5,783.8 339.0,783.5 339.5,783.3 340.0,783.3 340.5,783.7 341.0,784.1 341.5,784.2 342.0,783.9 342.5,783.4 343.0,783.0 343.5,783.0 344.0,783.3 344.5,783.6 345.0,783.5 345.5,783.2 346.0,782.9 346.5,782.9 347.0,783.2 347.5,783.7 348.0,784.0 348.5,783.9 349.0,783.4 349.5,783.1 350.0,783.0 350.5,783.2 351.0,783.5 351.5,783.4 352.0,783.1 352.5,782.6 353.0,782.5 353.5,782.7 354.0,783.2 354.5,783.6 355.0,783.6 355.5,783.3 356.0,783.0 356.5,782.9 357.0,783.1 357.5,783.4 358.0,783.5 358.5,783.1 359.0,782.6 359.5,782.3 360.0,782.3 360.5,782.7 361.0,783.1 361.5,783.2 362.0,783.0 362.5,782.7 363.0,782.6 363.5,782.9 364.0,783.3 364.5,783.5 365.0,783.2 365.5,782.7 366.0,782.3 366.5,782.2 367.0,782.4 367.5,782.7 368.0,782.9 368.5,782.7 369.0,782.3 369.5,782.2 370.0,782.5 370.5,782.9 371.0,783.3 371.5,783.3 372.0,782.9 372.5,782.4 373.0,782.2 373.5,782.4 374.0,782.7 374.5,782.8 375.0,782.5 375.5,782.1 376.0,781.9 376.5,782.0 377.0,782.5 377.5,782.9 378.0,783.1 378.5,782.8 379.0,782.4 379.5,782.2 380.0,782.4 380.5,782.7 381.0,782.8 381.5,782.6 382.0,782.1 382.5,781.7 383.0,781.7 383.5,782.1 384.0,782.5 384.5,782.8 385.0,782.6 385.5,782.3 386.0,782.1 386.5,782.2 387.0,782.6 387.5,782.9 388.0,782.8 388.5,782.3 389.0,781.8 389.5,781.6 390.0,781.8 390.5,782.2 391.0,782.4 391.5,782.3 392.0,782.0 392.5,781.8 393.0,782.0 393.5,782.4 394.0,782.8 394.5,782.8 395.0,782.5 395.5,782.0 396.0,781.6 396.5,781.7 397.0,782.0 397.5,782.2 398.0,782.1 398.5,781.8 399.0,781.5 399.5,781.5 400.0,782.0 400.5,782.4 401.0,782.7 401.5,782.5 402.0,782.1 402.5,781.7 403.0,781.7 403.5,782.0 404.0,782.2 404.5,782.1 405.0,781.7 405.5,781.3 406.0,781.2 406.5,781.5 407.0,782.0 407.5,782.3 408.0,782.3 408.5,782.0 409.0,781.7 409.5,781.7 410.0,782.0 410.5,782.3 411.0,782.3 411.5,781.9 412.0,781.4 412.5,781.1 413.0,781.2 413.5,781.6 414.0,782.0 414.5,782.0 415.0,781.7 415.5,781.5 416.0,781.5 416.5,781.8 417.0,782.2 417.5,782.3 418.0,782.1 418.5,781.5 419.0,781.1 419.5,781.1 420.0,781.4 420.5,781.7 421.0,781.7 421.5,781.5 422.0,781.2 422.5,781.1 423.0,781.4 423.5,781.9 424.0,782.2 424.5,782.1 425.0,781.7 425.5,781.2 426.0,781.1 426.5,781.3 427.0,781.6 427.5,781.6 428.0,781.3 428.5,780.9 429.0,780.6 429.5,780.8 430.0,781.3 430.5,781.7 431.0,781.8 431.5,781.5 432.0,781.1 432.5,780.9 433.0,781.1 433.5,781.4 434.0,781.4 434.5,781.1 435.0,780.6 435.5,780.3 436.0,780.3 436.5,780.7 437.0,781.1 437.5,781.2 438.0,781.0 438.5,780.7 439.0,780.6 439.5,780.8 440.0,781.1 440.5,781.3 441.0,781.1 441.5,780.6 442.0,780.1 442.5,780.0 443.0,780.2 443.5,780.6 444.0,780.7 444.5,780.6 445.0,780.2 445.5,780.1 446.0,780.2 446.5,780.7 447.0,781.0 447.5,781.0 448.0,780.6 448.5,780.1 449.0,779.8 449.5,779.9 450.0,780.2 450.5,780.4 451.0,780.2 451.5,779.8 452.0,779.5 452.5,779.6 453.0,780.0 453.5,780.5 454.0,780.7 454.5,780.4 455.0,780.0 455.5,779.7 456.0,779.7 456.5,780.0 457.0,780.2 457.5,780.0 458.0,779.5 458.5,779.1 459.0,779.1 459.5,779.4 460.0,779.9 460.5,780.1 461.0,780.0 461.5,779.7 462.0,779.4 462.5,779.5 463.0,779.8 463.5,780.0 464.0,779.9 464.5,779.5 465.0,778.9 465.5,778.7 466.0,778.9 466.5,779.3 467.0,779.6 467.5,779.5 468.0,779.2 468.5,779.0 469.0,779.0 469.5,779.4 470.0,779.8 470.5,779.9 471.0,779.6 471.5,779.0 472.0,778.7 472.5,778.7 473.0,779.1 473.5,779.4 474.0,779.4 474.5,779.1 475.0,778.8 475.5,778.8 476.0,779.2 476.5,779.7 477.0,780.0 477.5,779.8 478.0,779.4 478.5,779.0 479.0,778.9 479.5,779.2 480.0,779.3 480.5,779.3 481.0,779.3 481.5,779.3 482.0,779.3 482.5,779.3 483.0,779.3 483.5,779.3 484.0,779.3 484.5,779.3 485.0,779.3 485.5,779.3 486.0,779.3 486.5,779.3 487.0,779.3 487.5,779.3 488.0,779.3 488.5,779.3 489.0,779.3 489.5,779.3 490.0,779.3 490.5,779.3 491.0,779.3 491.5,779.3 492.0,779.3 492.5,779.3 493.0,779.3 493.5,779.3 494.0,779.3 494.5,779.4 495.0,779.4 495.5,779.4 496.0,779.4 496.5,779.4 497.0,779.4 497.5,779.4 498.0,779.4 498.5,779.4 499.0,779.4 499.5,779.4 500.0,779.4 500.5,779.4 501.0,779.4 501.5,779.4 502.0,779.4 502.5,779.4 503.0,779.4 503.5,779.4 504.0,779.4 504.5,779.4 505.0,779.4 505.5,779.4 506.0,779.4 506.5,779.4 507.0,779.4 507.5,779.4 508.0,779.4 508.5,779.4 509.0,779.4 509.5,779.4 510.0,779.4 510.5,779.4 511.0,779.4 511.5,779.5 512.0,779.5 512.5,779.5 513.0,779.5 513.5,779.5 514.0,779.5 514.5,779.5 515.0,779.5 515.5,779.5 516.0,779.5 516.5,779.5 517.0,779.5 517.5,779.5 518.0,779.5 518.5,779.5 519.0,779.5 519.5,779.5 520.0,779.5 520.5,779.5 521.0,779.6 521.5,779.6 522.0,779.6 522.5,779.6 523.0,779.7 523.5,779.7 524.0,779.7 524.5,779.8 525.0,779.8 525.5,779.8 526.0,779.9 526.5,779.9 527.0,779.9 527.5,779.9 528.0,780.0 528.5,780.0 529.0,780.0 529.5,780.1 530.0,780.1 530.5,780.1 531.0,780.1 531.5,780.2 532.0,780.2 532.5,780.2 533.0,780.3 533.5,780.3 534.0,780.3 534.5,780.4 535.0,780.4 535.5,780.4 536.0,780.4 536.5,780.5 537.0,780.5 537.5,780.5 538.0,780.6 538.5,780.6 539.0,780.6 539.5,780.6 540.0,780.7 540.5,780.7 541.0,780.3 541.5,780.0 542.0,780.3 542.5,780.7 543.0,781.2 543.5,781.2 544.0,781.0 544.5,780.8 545.0,780.8 545.5,781.1 546.0,781.6 546.5,781.7 547.0,781.4 547.5,780.9 548.0,780.6 548.5,780.6 549.0,781.0 549.5,781.4 550.0,781.5 550.5,781.2 551.0,781.0 551.5,781.0 552.0,781.3 552.5,781.9 553.0,782.2 553.5,782.0 554.0,781.6 554.5,781.2 555.0,781.1 555.5,781.4 556.0,781.7 556.5,781.8 557.0,781.5 557.5,781.2 558.0,781.1 558.5,781.3 559.0,781.9 559.5,782.3 560.0,782.4 560.5,782.1 561.0,781.7 561.5,781.6 562.0,781.8 562.5,782.1 563.0,782.2 563.5,782.0 564.0,781.5 564.5,781.2 565.0,781.4 565.5,781.8 566.0,782.3 566.5,782.5 567.0,782.3 567.5,782.0 568.0,781.9 568.5,782.1 569.0,782.5 569.5,782.7 570.0,782.5 570.5,782.0 571.0,781.6 571.5,781.6 572.0,781.9 572.5,782.3 573.0,782.5 573.5,782.4 574.0,782.1 574.5,782.0 575.0,782.3 575.5,782.7 576.0,783.1 576.5,783.0 577.0,782.6 577.5,782.2 578.0,782.0 578.5,782.2 579.0,782.5 579.5,782.7 580.0,782.6 580.5,782.3 581.0,782.1 581.5,782.3 582.0,782.8 582.5,783.2 583.0,783.4 583.5,783.1 584.0,782.7 584.5,782.5 585.0,782.6 585.5,782.9 586.0,783.1 586.5,783.0 587.0,782.6 587.5,782.3 588.0,782.3 588.5,782.7 589.0,783.2 589.5,783.5 590.0,783.4 590.5,783.1 591.0,782.9 591.5,783.0 592.0,783.3 592.5,783.6 593.0,783.5 593.5,783.1 594.0,782.6 594.5,782.5 595.0,782.7 595.5,783.2 596.0,783.6 596.5,783.5 597.0,783.3 597.5,783.1 598.0,783.2 598.5,783.5 599.0,783.9 599.5,784.0 600.0,783.6 600.5,783.1 601.0,782.8 601.5,782.9 602.0,783.2 602.5,783.6 603.0,783.6 603.5,783.3 604.0,783.0 604.5,783.1 605.0,783.5 605.5,784.0 606.0,784.2 606.5,784.0 607.0,783.5 607.5,783.2 608.0,783.1 608.5,783.4 609.0,783.7 609.5,783.7 610.0,783.4 610.5,783.0 611.0,783.0 611.5,783.3 612.0,783.8 612.5,784.2 613.0,784.2 613.5,783.8 614.0,783.5 614.5,783.4 615.0,783.7 615.5,784.0 616.0,784.0 616.5,783.7 617.0,783.2 617.5,783.0 618.0,783.2 618.5,783.7 619.0,784.1 619.5,784.2 620.0,784.0 620.5,783.7 621.0,783.6 621.5,783.9 622.0,784.3 622.5,784.4 623.0,784.1 623.5,783.6 624.0,783.2 624.5,783.2 625.0,783.6 625.5,784.0 626.0,784.1 626.5,784.0 627.0,783.7 627.5,783.6 628.0,783.9 628.5,784.4 629.0,784.6 629.5,784.5 630.0,784.1 630.5,783.6 631.0,783.5 631.5,783.7 632.0,784.1 632.5,784.2 633.0,784.0 633.5,783.7 634.0,783.5 634.5,783.7 635.0,784.3 635.5,784.7 636.0,784.8 636.5,784.4 637.0,784.0 637.5,783.8 638.0,784.0 638.5,784.3 639.0,784.4 639.5,784.2 640.0,783.8 640.5,783.5 641.0,783.6 641.5,784.1 642.0,784.5 642.5,784.8 643.0,784.6 643.5,784.2 644.0,784.0 644.5,784.2 645.0,784.5 645.5,784.7 646.0,784.6 646.5,784.1 647.0,783.7 647.5,783.6 648.0,783.9 648.5,784.3 649.0,784.6 649.5,784.5 650.0,784.2 650.5,784.0 651.0,784.2 651.5,784.6 652.0,784.9 652.5,784.9 653.0,784.5 653.5,784.0 654.0,783.7 654.5,783.9 655.0,784.2 655.5,784.5 656.0,784.4 656.5,784.1 657.0,783.9 657.5,784.0 658.0,784.4 658.5,784.9 659.0,785.0 659.5,784.8 660.0,784.3 660.5,784.3 661.0,784.3 661.5,784.3 662.0,784.3 662.5,784.4 663.0,784.4 663.5,784.4 664.0,784.4 664.5,784.4 665.0,784.4 665.5,784.4 666.0,784.4 666.5,784.4 667.0,784.4 667.5,784.4 668.0,784.4 668.5,784.4 669.0,784.4 669.5,784.4 670.0,784.4 670.5,784.4 671.0,784.4 671.5,784.4 672.0,784.4 672.5,784.4 673.0,784.4 673.5,784.4 674.0,784.4 674.5,784.4 675.0,784.4 675.5,784.4 676.0,784.4 676.5,784.5 677.0,784.5 677.5,784.5 678.0,784.5 678.5,784.5 679.0,784.5 679.5,784.5 680.0,784.5 680.5,784.5 681.0,784.5 681.5,784.5 682.0,784.5 682.5,784.5 683.0,784.5 683.5,784.5 684.0,784.5 684.5,784.5 685.0,784.5 685.5,784.5 686.0,784.5 686.5,784.5 687.0,784.5 687.5,784.5 688.0,784.5 688.5,784.5 689.0,784.5 689.5,784.5 690.0,784.5 690.5,784.5 691.0,784.6 691.5,784.6 692.0,784.6 692.5,784.6 693.0,784.6 693.5,784.6 694.0,784.6 694.5,784.6 695.0,784.6 695.5,784.6 696.0,784.6 696.5,784.6 697.0,784.6 697.5,784.6 698.0,784.6 698.5,784.6 699.0,784.6 699.5,784.6 700.0,784.6 700.5,784.6 701.0,784.6 701.5,784.6 702.0,784.6 702.5,784.6 703.0,784.6 703.5,784.6 704.0,784.6 704.5,784.6 705.0,784.7 705.5,784.7 706.0,784.7 706.5,784.7 707.0,784.7 707.5,784.7 708.0,784.7 708.5,784.7 709.0,784.7 709.5,784.7 710.0,784.7 710.5,784.7 711.0,784.7 711.5,784.7 712.0,784.7 712.5,784.7 713.0,784.7 713.5,784.7 714.0,784.7 714.5,784.7 715.0,784.7 715.5,784.7 716.0,784.7 716.5,784.7 717.0,784.7 717.5,784.7 718.0,784.7 718.5,784.7 719.0,784.8 719.5,784.8 720.0,784.8 720.5,784.8 721.0,784.8 721.5,784.8 722.0,784.8 722.5,784.8 723.0,784.8 723.5,784.8 724.0,784.8 724.5,784.8 725.0,784.8 725.5,784.8 726.0,784.8 726.5,784.8 727.0,784.8 727.5,784.8 728.0,784.8 728.5,784.8 729.0,784.8 729.5,784.8 730.0,784.8 730.5,784.8 731.0,784.8 731.5,784.8 732.0,784.8 732.5,784.8 733.0,784.8 733.5,784.8 734.0,784.8 734.5,784.8 735.0,784.8 735.5,784.8 736.0,784.8 736.5,784.8 737.0,784.8 737.5,784.8 738.0,784.8 738.5,784.8 739.0,784.8 739.5,784.8 740.0,784.8 740.5,784.8 741.0,784.8 741.5,784.8 742.0,784.8 742.5,784.8 743.0,784.8 743.5,784.8 744.0,784.8 744.5,784.8 745.0,784.8 745.5,784.8 746.0,784.8 746.5,784.8 747.0,784.8 747.5,784.8 748.0,784.8 748.5,784.8 749.0,784.8 749.5,784.8 750.0,784.8 750.5,784.8 751.0,784.8 751.5,784.8 752.0,784.8 752.5,784.8 753.0,784.8 753.5,784.8 754.0,784.8 754.5,784.8 755.0,784.8 755.5,784.8 756.0,784.8 756.5,784.8 757.0,784.8 757.5,784.8" fill="none" stroke="#62c0ea" stroke-width="1.25" shape-rendering="auto"/><rect x="91" y="704" width="6" height="1" fill="#f08c78"/><rect x="104" y="704" width="5" height="1" fill="#f08c78"/><rect x="118" y="704" width="6" height="1" fill="#f08c78"/><rect x="128" y="704" width="3" height="1" fill="#f08c78"/><rect x="140" y="704" width="5" height="1" fill="#f08c78"/><rect x="157" y="704" width="6" height="1" fill="#f08c78"/><rect x="167" y="704" width="2" height="1" fill="#f08c78"/><rect x="176" y="704" width="4" height="1" fill="#f08c78"/><rect x="184" y="704" width="2" height="1" fill="#f08c78"/><rect x="195" y="704" width="8" height="1" fill="#f08c78"/><rect x="215" y="704" width="2" height="1" fill="#f08c78"/><rect x="226" y="704" width="5" height="1" fill="#f08c78"/><rect x="238" y="704" width="8" height="1" fill="#f08c78"/><rect x="258" y="704" width="6" height="1" fill="#f08c78"/><rect x="276" y="704" width="3" height="1" fill="#f08c78"/><rect x="288" y="704" width="2" height="1" fill="#f08c78"/><rect x="299" y="704" width="2" height="1" fill="#f08c78"/><rect x="304" y="704" width="2" height="1" fill="#f08c78"/><rect x="310" y="704" width="3" height="1" fill="#f08c78"/><rect x="322" y="704" width="2" height="1" fill="#f08c78"/><rect x="331" y="704" width="4" height="1" fill="#f08c78"/><rect x="342" y="704" width="6" height="1" fill="#f08c78"/><rect x="352" y="704" width="6" height="1" fill="#f08c78"/><rect x="362" y="704" width="8" height="1" fill="#f08c78"/><rect x="375" y="704" width="5" height="1" fill="#f08c78"/><rect x="383" y="704" width="8" height="1" fill="#f08c78"/><rect x="394" y="704" width="5" height="1" fill="#f08c78"/><rect x="411" y="704" width="4" height="1" fill="#f08c78"/><rect x="422" y="704" width="6" height="1" fill="#f08c78"/><rect x="431" y="704" width="8" height="1" fill="#f08c78"/><rect x="444" y="704" width="4" height="1" fill="#f08c78"/><rect x="452" y="704" width="6" height="1" fill="#f08c78"/><rect x="463" y="704" width="2" height="1" fill="#f08c78"/><rect x="468" y="704" width="6" height="1" fill="#f08c78"/><rect x="477" y="704" width="5" height="1" fill="#f08c78"/><rect x="485" y="704" width="4" height="1" fill="#f08c78"/><rect x="496" y="704" width="2" height="1" fill="#f08c78"/><rect x="501" y="704" width="8" height="1" fill="#f08c78"/><rect x="512" y="704" width="3" height="1" fill="#f08c78"/><rect x="519" y="704" width="2" height="1" fill="#f08c78"/><rect x="528" y="704" width="5" height="1" fill="#f08c78"/><rect x="545" y="704" width="5" height="1" fill="#f08c78"/><rect x="557" y="704" width="2" height="1" fill="#f08c78"/><rect x="568" y="704" width="8" height="1" fill="#f08c78"/><rect x="580" y="704" width="8" height="1" fill="#f08c78"/><rect x="593" y="704" width="4" height="1" fill="#f08c78"/><rect x="600" y="704" width="4" height="1" fill="#f08c78"/><rect x="609" y="704" width="2" height="1" fill="#f08c78"/><rect x="618" y="704" width="2" height="1" fill="#f08c78"/><rect x="624" y="704" width="3" height="1" fill="#f08c78"/><rect x="639" y="704" width="2" height="1" fill="#f08c78"/><rect x="644" y="704" width="2" height="1" fill="#f08c78"/><rect x="653" y="704" width="5" height="1" fill="#f08c78"/><rect x="662" y="704" width="8" height="1" fill="#f08c78"/><rect x="679" y="704" width="3" height="1" fill="#f08c78"/><rect x="689" y="704" width="6" height="1" fill="#f08c78"/><rect x="699" y="704" width="8" height="1" fill="#f08c78"/><rect x="711" y="704" width="5" height="1" fill="#f08c78"/><rect x="728" y="704" width="5" height="1" fill="#f08c78"/><rect x="736" y="704" width="5" height="1" fill="#f08c78"/><rect x="748" y="704" width="3" height="1" fill="#f08c78"/><rect x="83" y="704.7" width="22" height="1.4" fill="#fff8f4" shape-rendering="auto"/><rect x="105" y="704.7" width="30" height="1.4" fill="#fff8f4" shape-rendering="auto"/><rect x="135" y="705.7" width="4" height="1.4" fill="#fff8f4" shape-rendering="auto"/><rect x="139" y="704.7" width="30" height="1.4" fill="#fff8f4" shape-rendering="auto"/><rect x="169" y="705.7" width="3" height="1.4" fill="#fff8f4" shape-rendering="auto"/><rect x="172" y="704.7" width="6" height="1.4" fill="#fff8f4" shape-rendering="auto"/><rect x="178" y="704.7" width="4" height="1.4" fill="#fff8f4" shape-rendering="auto"/><rect x="182" y="704.7" width="4" height="1.4" fill="#fff8f4" shape-rendering="auto"/><rect x="186" y="705.7" width="2" height="1.4" fill="#fff8f4" shape-rendering="auto"/><rect x="188" y="704.7" width="14" height="1.4" fill="#fff8f4" shape-rendering="auto"/><rect x="202" y="704.7" width="4" height="1.4" fill="#fff8f4" shape-rendering="auto"/><rect x="206" y="704.7" width="6" height="1.4" fill="#fff8f4" shape-rendering="auto"/><rect x="212" y="704.7" width="30" height="1.4" fill="#fff8f4" shape-rendering="auto"/><rect x="242" y="704.7" width="14" height="1.4" fill="#fff8f4" shape-rendering="auto"/><rect x="256" y="705.7" width="3" height="1.4" fill="#fff8f4" shape-rendering="auto"/><rect x="259" y="705.7" width="2" height="1.4" fill="#fff8f4" shape-rendering="auto"/><rect x="261" y="704.7" width="6" height="1.4" fill="#fff8f4" shape-rendering="auto"/><rect x="267" y="704.7" width="22" height="1.4" fill="#fff8f4" shape-rendering="auto"/><rect x="289" y="704.7" width="6" height="1.4" fill="#fff8f4" shape-rendering="auto"/><rect x="295" y="705.7" width="2" height="1.4" fill="#fff8f4" shape-rendering="auto"/><rect x="297" y="705.7" width="2" height="1.4" fill="#fff8f4" shape-rendering="auto"/><rect x="299" y="705.7" width="2" height="1.4" fill="#fff8f4" shape-rendering="auto"/><rect x="301" y="704.7" width="9" height="1.4" fill="#fff8f4" shape-rendering="auto"/><rect x="310" y="704.7" width="6" height="1.4" fill="#fff8f4" shape-rendering="auto"/><rect x="316" y="704.7" width="30" height="1.4" fill="#fff8f4" shape-rendering="auto"/><rect x="346" y="704.7" width="6" height="1.4" fill="#fff8f4" shape-rendering="auto"/><rect x="352" y="704.7" width="30" height="1.4" fill="#fff8f4" shape-rendering="auto"/><rect x="382" y="704.7" width="14" height="1.4" fill="#fff8f4" shape-rendering="auto"/><rect x="396" y="704.7" width="4" height="1.4" fill="#fff8f4" shape-rendering="auto"/><rect x="400" y="704.7" width="14" height="1.4" fill="#fff8f4" shape-rendering="auto"/><rect x="414" y="704.7" width="6" height="1.4" fill="#fff8f4" shape-rendering="auto"/><rect x="420" y="704.7" width="4" height="1.4" fill="#fff8f4" shape-rendering="auto"/><rect x="424" y="705.7" width="4" height="1.4" fill="#fff8f4" shape-rendering="auto"/><rect x="428" y="704.7" width="22" height="1.4" fill="#fff8f4" shape-rendering="auto"/><rect x="450" y="704.7" width="22" height="1.4" fill="#fff8f4" shape-rendering="auto"/><rect x="472" y="704.7" width="30" height="1.4" fill="#fff8f4" shape-rendering="auto"/><rect x="502" y="704.7" width="4" height="1.4" fill="#fff8f4" shape-rendering="auto"/><rect x="506" y="705.7" width="3" height="1.4" fill="#fff8f4" shape-rendering="auto"/><rect x="509" y="704.7" width="14" height="1.4" fill="#fff8f4" shape-rendering="auto"/><rect x="523" y="704.7" width="9" height="1.4" fill="#fff8f4" shape-rendering="auto"/><rect x="532" y="704.7" width="14" height="1.4" fill="#fff8f4" shape-rendering="auto"/><rect x="546" y="704.7" width="30" height="1.4" fill="#fff8f4" shape-rendering="auto"/><rect x="576" y="704.7" width="4" height="1.4" fill="#fff8f4" shape-rendering="auto"/><rect x="580" y="704.7" width="4" height="1.4" fill="#fff8f4" shape-rendering="auto"/><rect x="584" y="705.7" width="3" height="1.4" fill="#fff8f4" shape-rendering="auto"/><rect x="587" y="704.7" width="4" height="1.4" fill="#fff8f4" shape-rendering="auto"/><rect x="591" y="704.7" width="14" height="1.4" fill="#fff8f4" shape-rendering="auto"/><rect x="605" y="704.7" width="14" height="1.4" fill="#fff8f4" shape-rendering="auto"/><rect x="619" y="704.7" width="4" height="1.4" fill="#fff8f4" shape-rendering="auto"/><rect x="623" y="704.7" width="4" height="1.4" fill="#fff8f4" shape-rendering="auto"/><rect x="627" y="704.7" width="6" height="1.4" fill="#fff8f4" shape-rendering="auto"/><rect x="633" y="704.7" width="6" height="1.4" fill="#fff8f4" shape-rendering="auto"/><rect x="639" y="705.7" width="3" height="1.4" fill="#fff8f4" shape-rendering="auto"/><rect x="642" y="704.7" width="9" height="1.4" fill="#fff8f4" shape-rendering="auto"/><rect x="651" y="704.7" width="9" height="1.4" fill="#fff8f4" shape-rendering="auto"/><rect x="660" y="705.7" width="3" height="1.4" fill="#fff8f4" shape-rendering="auto"/><rect x="663" y="704.7" width="4" height="1.4" fill="#fff8f4" shape-rendering="auto"/><rect x="667" y="705.7" width="3" height="1.4" fill="#fff8f4" shape-rendering="auto"/><rect x="670" y="704.7" width="9" height="1.4" fill="#fff8f4" shape-rendering="auto"/><rect x="679" y="704.7" width="14" height="1.4" fill="#fff8f4" shape-rendering="auto"/><rect x="693" y="704.7" width="6" height="1.4" fill="#fff8f4" shape-rendering="auto"/><rect x="699" y="704.7" width="22" height="1.4" fill="#fff8f4" shape-rendering="auto"/><rect x="721" y="704.7" width="9" height="1.4" fill="#fff8f4" shape-rendering="auto"/><rect x="730" y="704.7" width="9" height="1.4" fill="#fff8f4" shape-rendering="auto"/><rect x="739" y="704.7" width="18" height="1.4" fill="#fff8f4" shape-rendering="auto"/></svg>
<span class="t" style="right:851.60px;top:604.79px;font-size:11px;line-height:14px;height:14px;color:#000;">0.5</span>
<div style="position:absolute;left:76px;top:611px;width:5px;height:1px;background:#000;"></div>
<span class="t" style="right:851.60px;top:697.79px;font-size:11px;line-height:14px;height:14px;color:#000;">0.4</span>
<div style="position:absolute;left:76px;top:704px;width:5px;height:1px;background:#000;"></div>
<span class="t" style="right:851.60px;top:790.79px;font-size:11px;line-height:14px;height:14px;color:#000;">0.3</span>
<div style="position:absolute;left:76px;top:797px;width:5px;height:1px;background:#000;"></div>
<span class="t" style="right:851.60px;top:883.79px;font-size:11px;line-height:14px;height:14px;color:#000;">0.2</span>
<div style="position:absolute;left:76px;top:890px;width:5px;height:1px;background:#000;"></div>
<div style="position:absolute;left:83px;top:893px;width:1px;height:5px;background:#000;"></div>
<span class="t" style="left:-17.20px;width:200px;text-align:center;top:897.99px;font-size:11px;line-height:14px;height:14px;color:#000;">0.0</span>
<div style="position:absolute;left:126px;top:893px;width:1px;height:5px;background:#000;"></div>
<span class="t" style="left:25.80px;width:200px;text-align:center;top:897.99px;font-size:11px;line-height:14px;height:14px;color:#000;">10.0</span>
<div style="position:absolute;left:169px;top:893px;width:1px;height:5px;background:#000;"></div>
<span class="t" style="left:68.80px;width:200px;text-align:center;top:897.99px;font-size:11px;line-height:14px;height:14px;color:#000;">20.0</span>
<div style="position:absolute;left:212px;top:893px;width:1px;height:5px;background:#000;"></div>
<span class="t" style="left:111.80px;width:200px;text-align:center;top:897.99px;font-size:11px;line-height:14px;height:14px;color:#000;">30.0</span>
<div style="position:absolute;left:255px;top:893px;width:1px;height:5px;background:#000;"></div>
<span class="t" style="left:154.80px;width:200px;text-align:center;top:897.99px;font-size:11px;line-height:14px;height:14px;color:#000;">40.0</span>
<div style="position:absolute;left:298px;top:893px;width:1px;height:5px;background:#000;"></div>
<span class="t" style="left:197.80px;width:200px;text-align:center;top:897.99px;font-size:11px;line-height:14px;height:14px;color:#000;">50.0</span>
<div style="position:absolute;left:341px;top:893px;width:1px;height:5px;background:#000;"></div>
<span class="t" style="left:240.80px;width:200px;text-align:center;top:897.99px;font-size:11px;line-height:14px;height:14px;color:#000;">60.0</span>
<div style="position:absolute;left:384px;top:893px;width:1px;height:5px;background:#000;"></div>
<span class="t" style="left:283.80px;width:200px;text-align:center;top:897.99px;font-size:11px;line-height:14px;height:14px;color:#000;">70.0</span>
<div style="position:absolute;left:427px;top:893px;width:1px;height:5px;background:#000;"></div>
<span class="t" style="left:326.80px;width:200px;text-align:center;top:897.99px;font-size:11px;line-height:14px;height:14px;color:#000;">80.0</span>
<div style="position:absolute;left:470px;top:893px;width:1px;height:5px;background:#000;"></div>
<span class="t" style="left:369.80px;width:200px;text-align:center;top:897.99px;font-size:11px;line-height:14px;height:14px;color:#000;">90.0</span>
<div style="position:absolute;left:513px;top:893px;width:1px;height:5px;background:#000;"></div>
<span class="t" style="left:412.80px;width:200px;text-align:center;top:897.99px;font-size:11px;line-height:14px;height:14px;color:#000;">100.0</span>
<div style="position:absolute;left:556px;top:893px;width:1px;height:5px;background:#000;"></div>
<span class="t" style="left:455.80px;width:200px;text-align:center;top:897.99px;font-size:11px;line-height:14px;height:14px;color:#000;">110.0</span>
<div style="position:absolute;left:599px;top:893px;width:1px;height:5px;background:#000;"></div>
<span class="t" style="left:498.80px;width:200px;text-align:center;top:897.99px;font-size:11px;line-height:14px;height:14px;color:#000;">120.0</span>
<div style="position:absolute;left:642px;top:893px;width:1px;height:5px;background:#000;"></div>
<span class="t" style="left:541.80px;width:200px;text-align:center;top:897.99px;font-size:11px;line-height:14px;height:14px;color:#000;">130.0</span>
<div style="position:absolute;left:685px;top:893px;width:1px;height:5px;background:#000;"></div>
<span class="t" style="left:584.80px;width:200px;text-align:center;top:897.99px;font-size:11px;line-height:14px;height:14px;color:#000;">140.0</span>
<div style="position:absolute;left:728px;top:893px;width:1px;height:5px;background:#000;"></div>
<span class="t" style="left:627.80px;width:200px;text-align:center;top:897.99px;font-size:11px;line-height:14px;height:14px;color:#000;">150.0</span>
<div style="position:absolute;left:771px;top:893px;width:1px;height:5px;background:#000;"></div>
<span class="t" style="left:670.80px;width:200px;text-align:center;top:897.99px;font-size:11px;line-height:14px;height:14px;color:#000;">160.0</span>
<span class="t" style="left:413.00px;top:912.19px;font-size:11px;line-height:14px;height:14px;color:#000;letter-spacing:-0.637px;">Time</span>
<span class="t" style="left:41px;top:745px;width:14px;height:14px;font-size:11px;line-height:14px;"><span style="position:absolute;left:7px;top:7px;transform:translate(-50%,-50%) rotate(-90deg);white-space:nowrap;letter-spacing:0.1px">Amplitude</span></span>
<div style="position:absolute;left:795.5px;top:593.5px;width:94.5px;height:335.5px;background:linear-gradient(90deg,#dcdcdc 0,#d6d6d6 9px,#c8c8c8 13px,#c8c8c8 62px,#000 62px,#000 79px,#cdcdcd 79px,#b0b0b0 86px,#7a7a7a 94px);box-shadow:inset 0 2px 0 0 #d8d8d8, inset 0 -2px 0 0 #8c8c8c;"></div>
<div style="position:absolute;left:795.5px;top:593.5px;width:62px;height:2px;background:#d8d8d8;"></div>
<span class="t" style="left:809.70px;top:595.69px;font-size:11px;line-height:14px;height:14px;color:#000;letter-spacing:-0.190px;">Plot 0</span>
<span class="t" style="left:809.70px;top:616.69px;font-size:11px;line-height:14px;height:14px;color:#000;letter-spacing:-0.190px;">Plot 1</span>
<span class="t" style="left:809.70px;top:637.69px;font-size:11px;line-height:14px;height:14px;color:#000;letter-spacing:-0.190px;">Plot 2</span>
<span class="t" style="left:809.70px;top:658.69px;font-size:11px;line-height:14px;height:14px;color:#000;letter-spacing:-0.190px;">Plot 3</span>
<span class="t" style="left:809.70px;top:679.69px;font-size:11px;line-height:14px;height:14px;color:#000;letter-spacing:-0.190px;">Plot 4</span>
<span class="t" style="left:809.70px;top:700.69px;font-size:11px;line-height:14px;height:14px;color:#000;letter-spacing:-0.190px;">Plot 5</span>
<span class="t" style="left:809.70px;top:721.69px;font-size:11px;line-height:14px;height:14px;color:#000;letter-spacing:-0.190px;">Plot 6</span>
<span class="t" style="left:809.70px;top:742.69px;font-size:11px;line-height:14px;height:14px;color:#000;letter-spacing:-0.190px;">Plot 7</span>
<span class="t" style="left:809.70px;top:763.69px;font-size:11px;line-height:14px;height:14px;color:#000;letter-spacing:-0.190px;">Plot 8</span>
<span class="t" style="left:809.70px;top:784.69px;font-size:11px;line-height:14px;height:14px;color:#000;letter-spacing:-0.190px;">Plot 9</span>
<span class="t" style="left:809.70px;top:805.69px;font-size:11px;line-height:14px;height:14px;color:#000;letter-spacing:-0.179px;">Plot 10</span>
<span class="t" style="left:809.70px;top:826.69px;font-size:11px;line-height:14px;height:14px;color:#000;letter-spacing:-0.062px;">Plot 11</span>
<span class="t" style="left:809.70px;top:847.69px;font-size:11px;line-height:14px;height:14px;color:#000;letter-spacing:-0.179px;">Plot 12</span>
<span class="t" style="left:809.70px;top:868.69px;font-size:11px;line-height:14px;height:14px;color:#000;letter-spacing:-0.179px;">Plot 13</span>
<span class="t" style="left:809.70px;top:889.69px;font-size:11px;line-height:14px;height:14px;color:#000;letter-spacing:-0.179px;">Plot 14</span>
<span class="t" style="left:809.70px;top:910.69px;font-size:11px;line-height:14px;height:14px;color:#000;letter-spacing:-0.179px;">Plot 15</span>
<svg style="position:absolute;left:857px;top:595px" width="18" height="332" viewBox="857 595 18 332"><polyline points="859,607.0 869,598.5 874.5,602.5" fill="none" stroke="#ffffff" stroke-width="1"/><polyline points="859,628.0 869,619.5 874.5,623.5" fill="none" stroke="#ff5a5a" stroke-width="1"/><polyline points="859,649.0 869,640.5 874.5,644.5" fill="none" stroke="#3fe43f" stroke-width="1"/><polyline points="859,670.0 869,661.5 874.5,665.5" fill="none" stroke="#5a9cf0" stroke-width="1"/><polyline points="859,691.0 869,682.5 874.5,686.5" fill="none" stroke="#f2f2f2" stroke-width="1"/><polyline points="859,712.0 869,703.5 874.5,707.5" fill="none" stroke="#c070e0" stroke-width="1"/><polyline points="859,733.0 869,724.5 874.5,728.5" fill="none" stroke="#ffa080" stroke-width="1"/><polyline points="859,754.0 869,745.5 874.5,749.5" fill="none" stroke="#5858ff" stroke-width="1"/><polyline points="859,775.0 869,766.5 874.5,770.5" fill="none" stroke="#ff7070" stroke-width="1"/><polyline points="859,796.0 869,787.5 874.5,791.5" fill="none" stroke="#b0e8ff" stroke-width="1"/><polyline points="859,817.0 869,808.5 874.5,812.5" fill="none" stroke="#ffffff" stroke-width="1"/><polyline points="859,838.0 869,829.5 874.5,833.5" fill="none" stroke="#ff5a5a" stroke-width="1"/><polyline points="859,859.0 869,850.5 874.5,854.5" fill="none" stroke="#3fe43f" stroke-width="1"/><polyline points="859,880.0 869,871.5 874.5,875.5" fill="none" stroke="#5a9cf0" stroke-width="1"/><polyline points="859,901.0 869,892.5 874.5,896.5" fill="none" stroke="#f2f2f2" stroke-width="1"/><polyline points="859,922.0 869,913.5 874.5,917.5" fill="none" stroke="#c060e0" stroke-width="1"/></svg>
</div>
</div>
<div style="position:absolute;left:902px;top:32px;width:17px;height:911px;"><div class="track" style="width:17px;height:911px"></div></div>
<div style="position:absolute;left:6px;top:943px;width:896px;height:17px;"><div class="track" style="width:896px;height:17px"></div></div>
<div style="position:absolute;left:902px;top:943px;width:17px;height:17px;background:#ece9d8;"><svg width="17" height="17"><path d="M15 4 L4 15 M15 8 L8 15 M15 12 L12 15" stroke="#b8b4a2" stroke-width="1.4"/><path d="M16 4 L5 15 M16 8 L9 15 M16 12 L13 15" stroke="#fff" stroke-width="1"/></svg></div>
<div style="position:absolute;left:902px;top:32px;width:17px;height:17px;"><div class="sbtn ab" style="width:17px;height:17px"><svg width="17" height="17" style="position:absolute;left:0;top:0"><path d="M5 10.6 L8.5 7 L12 10.6 Z" fill="#000"/></svg></div></div>
<div style="position:absolute;left:902px;top:926px;width:17px;height:17px;"><div class="sbtn ab" style="width:17px;height:17px"><svg width="17" height="17" style="position:absolute;left:0;top:0"><path d="M5 8.4 L8.5 12 L12 8.4 Z" fill="#000"/></svg></div></div>
<div style="position:absolute;left:902px;top:193px;width:17px;height:593px;"><div class="sbtn" style="width:17px;height:593px"></div></div>
<div style="position:absolute;left:6px;top:943px;width:17px;height:17px;"><div class="sbtn ab" style="width:17px;height:17px"><svg width="17" height="17" style="position:absolute;left:0;top:0"><path d="M11 5 L7.2 8.5 L11 12 Z" fill="#000"/></svg></div></div>
<div style="position:absolute;left:885px;top:943px;width:17px;height:17px;"><div class="sbtn ab" style="width:17px;height:17px"><svg width="17" height="17" style="position:absolute;left:0;top:0"><path d="M7 5 L10.8 8.5 L7 12 Z" fill="#000"/></svg></div></div>
<div style="position:absolute;left:164px;top:943px;width:583px;height:17px;"><div class="sbtn" style="width:583px;height:17px"></div></div>
</div>
</body></html>
